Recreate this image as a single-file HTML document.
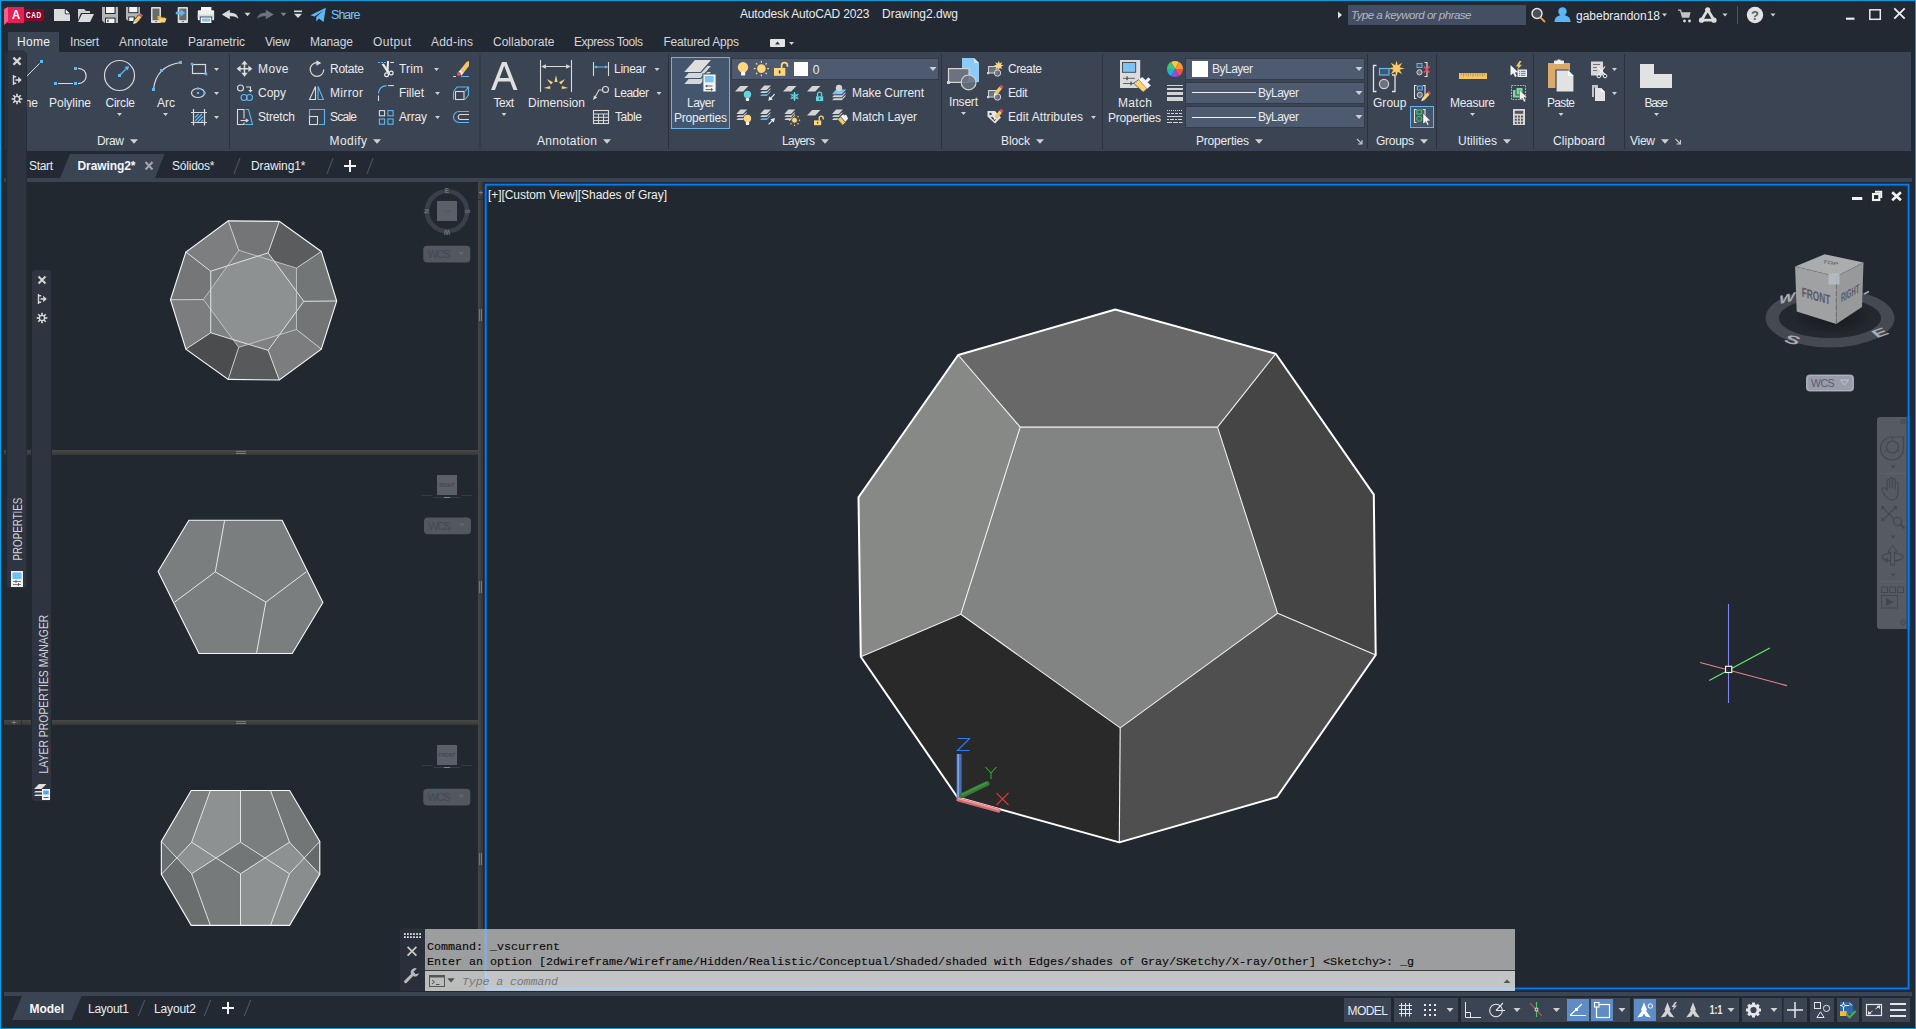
<!DOCTYPE html>
<html><head><meta charset="utf-8"><title>Autodesk AutoCAD 2023 - Drawing2.dwg</title>
<style>html,body{margin:0;padding:0;background:#222933;overflow:hidden}svg{display:block;font-family:"Liberation Sans",sans-serif}text{white-space:pre}</style></head>
<body>
<svg width="1916" height="1029" viewBox="0 0 1916 1029">
<rect x="0" y="0" width="1916" height="1029" fill="#222933" />
<rect x="8" y="52" width="1903" height="99" fill="#3b4453" />
<rect x="8" y="32" width="51" height="20" fill="#3b4453" />
<rect x="27" y="178" width="1885" height="4" fill="#3b4453" />
<rect x="4" y="992" width="1908" height="4" fill="#3b4453" />
<rect x="4" y="182" width="1908" height="810" fill="#212830" />
<polygon points="4,9 8,7 8,21.5 4,25" fill="#f0628c" stroke="none" stroke-width="1" />
<rect x="8" y="7" width="16" height="16" fill="#e61f55" />
<rect x="24" y="9" width="20" height="12" fill="#87062b" />
<text x="0" y="0" font-size="12" fill="#fff" font-weight="bold" transform="translate(11.9 18.9) scale(0.94 1)">A</text>
<text x="0" y="0" font-size="8.4" fill="#fff" font-weight="bold" letter-spacing="0.9" transform="translate(25.9 18) scale(0.76 1)">CAD</text>
<polygon points="54,9 65,9 70,14 70,21 54,21" fill="#dcdcdc" stroke="none" stroke-width="1" />
<path d="M65.3 9 V13.8 H70" fill="none" stroke="#222933" stroke-width="1" />
<polygon points="65.9,9.7 69.5,13.2 65.9,13.2" fill="#f6f6f6" stroke="none" stroke-width="1" />
<path d="M78 9 h6 l2 2 h4 v2 h-9 l-3 7 z" fill="#d0d0d0" stroke="none" stroke-width="1" />
<polygon points="82,14 94,14 90,22 78,22" fill="#dcdcdc" stroke="none" stroke-width="1" />
<rect x="102" y="7" width="16" height="16" fill="#b6b6b6" />
<rect x="105" y="7" width="10.6" height="7" fill="#222933" />
<rect x="106" y="7" width="8.5" height="6" fill="#f2f2f2" />
<rect x="105" y="17.6" width="10.6" height="5.4" fill="#222933" />
<rect x="106" y="18.6" width="8.5" height="4.4" fill="#f2f2f2" />
<rect x="107.3" y="19.6" width="1.3" height="2.6" fill="#444" />
<polygon points="102,20.5 104.5,23 102,23" fill="#222933" stroke="none" stroke-width="1" />
<rect x="126" y="7" width="14" height="14" fill="#b6b6b6" />
<rect x="128.3" y="7" width="10" height="6.2" fill="#222933" />
<rect x="129.2" y="7" width="8.2" height="5.2" fill="#f2f2f2" />
<rect x="128.3" y="16.5" width="6.5" height="4.5" fill="#222933" />
<rect x="129.2" y="17.4" width="4.5" height="3.6" fill="#f2f2f2" />
<polygon points="126,19 128,21 126,21" fill="#222933" stroke="none" stroke-width="1" />
<polygon points="133.2,20.5 138.6,14.2 142.4,17.4 137,23.7" fill="#222933" stroke="none" stroke-width="1" />
<polygon points="134,20.6 138.8,15 141.5,17.3 136.7,22.9" fill="#f3c662" stroke="none" stroke-width="1" />
<polygon points="138.8,15 140.4,13.2 143.1,15.5 141.5,17.3" fill="#ee4d5e" stroke="none" stroke-width="1" />
<polygon points="134,20.6 136.7,22.9 133.2,24" fill="#ececec" stroke="none" stroke-width="1" />
<rect x="151" y="7" width="10" height="16" fill="#dedede" rx="1"/>
<rect x="152.5" y="8.6" width="7" height="11.6" fill="#6a6a6a" />
<rect x="155" y="21.2" width="2" height="0.9" fill="#666" />
<path d="M157.6 16 h3.2 l1 1.4 h3.4 v2 h-7.6 z" fill="#e9b549" stroke="none" stroke-width="1" />
<polygon points="159.6,18.4 166.6,18.4 165,22.6 158,22.6" fill="#fbd476" stroke="none" stroke-width="1" />
<rect x="177.7" y="7" width="10.3" height="16" fill="#dedede" rx="1"/>
<rect x="179.3" y="8.6" width="7.2" height="11.6" fill="#6a6a6a" />
<rect x="182" y="21.2" width="2" height="0.9" fill="#666" />
<path d="M175.8 11.7 h4.8 v-2.5 l4.6 3.8 l-4.6 3.8 v-2.5 h-4.8 z" fill="#5cb8f5" stroke="none" stroke-width="1" />
<rect x="201" y="7" width="10.4" height="5" fill="#f6f6f6" />
<rect x="197.8" y="10.2" width="16.3" height="10" fill="#f0f0f0" rx="1"/>
<rect x="197.8" y="14.5" width="16.3" height="3.5" fill="#dadada" />
<rect x="199.8" y="16.6" width="12.4" height="6.5" fill="#222933" />
<rect x="200.6" y="17.4" width="10.8" height="5.6" fill="#f6f6f6" />
<rect x="202" y="18.6" width="8.2" height="3" fill="#7cc4f6" />
<path d="M221.8 14.5 L229.8 9.8 V12.7 C235.2 12.7 237.9 14.8 238.3 18.7 C236.2 16.7 234 16.3 229.8 16.3 V19.2 Z" fill="#dcdcdc" stroke="none" stroke-width="1" />
<polygon points="244.5,12.75 250.5,12.75 247.5,16.25" fill="#d4d4d4" stroke="none" stroke-width="1" />
<path d="M273.8 14.5 L265.8 9.8 V12.7 C260.4 12.7 257.7 14.8 257.3 18.7 C259.4 16.7 261.6 16.3 265.8 16.3 V19.2 Z" fill="#6d737e" stroke="none" stroke-width="1" />
<polygon points="280.5,12.75 286.5,12.75 283.5,16.25" fill="#7d838d" stroke="none" stroke-width="1" />
<rect x="294" y="10.5" width="8" height="1.6" fill="#dcdcdc" />
<polygon points="294.0,13.7 302.0,13.7 298,18.1" fill="#dcdcdc" stroke="none" stroke-width="1" />
<path d="M310.4 15.2 L325.8 7.8 L323.6 22 L318.8 18.6 L316.4 21.6 L316.2 17 L323.4 10.6 L314.6 16.4 Z" fill="#5cb8f5" stroke="none" stroke-width="1" />
<text x="331" y="19.3" font-size="12.5" fill="#78c4fb" textLength="29.5" lengthAdjust="spacing" >Share</text>
<text x="740" y="17.6" font-size="12" fill="#e9ebee" textLength="129.5" lengthAdjust="spacing" >Autodesk AutoCAD 2023</text>
<text x="882" y="17.6" font-size="12" fill="#e9ebee" textLength="76" lengthAdjust="spacing" >Drawing2.dwg</text>
<polygon points="1338,11.5 1342,15 1338,18.5" fill="#e0e0e0" stroke="none" stroke-width="1" />
<rect x="1348" y="5" width="178" height="20" fill="#454f63" />
<text x="1351" y="19" font-size="11.5" fill="#b3b7bf" textLength="120.5" lengthAdjust="spacing" font-style="italic" >Type a keyword or phrase</text>
<circle cx="1537" cy="13.5" r="5" fill="#4a4f58" stroke="#e8e8e8" stroke-width="1.4" />
<line x1="1540.5" y1="17.5" x2="1545" y2="22" stroke="#e0a050" stroke-width="1.8" />
<circle cx="1562.5" cy="11.5" r="4.2" fill="#5bb5f5" stroke="none" stroke-width="1" />
<path d="M1554.5 22 c0 -5 3.5 -7 8 -7 s8 2 8 7 z" fill="#5bb5f5" stroke="none" stroke-width="1" />
<text x="1576" y="19.8" font-size="12" fill="#e9ebee" textLength="84" lengthAdjust="spacing" >gabebrandon18</text>
<polygon points="1662.0,13.5 1667.0,13.5 1664.5,16.5" fill="#d0d0d0" stroke="none" stroke-width="1" />
<path d="M1678 9.5 h3 l0.8 2.8 h8.8 l-1.4 5.4 h-7.2 l-2 -7 h-2 z" fill="#c4c4c4" stroke="none" stroke-width="1" />
<circle cx="1684.5" cy="21" r="1.4" fill="#dcdcdc" stroke="none" stroke-width="1" />
<circle cx="1689.5" cy="21" r="1.4" fill="#dcdcdc" stroke="none" stroke-width="1" />
<polygon points="1707.7,9.8 1714,20.2 1701.5,20.2" fill="none" stroke="#dcdcdc" stroke-width="2.8" stroke-linejoin="round"/>
<circle cx="1707.7" cy="9.8" r="2.6" fill="#dcdcdc" stroke="none" stroke-width="1" />
<circle cx="1714" cy="20.2" r="2.6" fill="#dcdcdc" stroke="none" stroke-width="1" />
<circle cx="1701.5" cy="20.2" r="2.6" fill="#dcdcdc" stroke="none" stroke-width="1" />
<polygon points="1722.5,13.5 1727.5,13.5 1725,16.5" fill="#d0d0d0" stroke="none" stroke-width="1" />
<line x1="1737.5" y1="6" x2="1737.5" y2="24" stroke="#46566c" stroke-width="1" />
<circle cx="1755" cy="15" r="8.2" fill="#e2e2e2" stroke="none" stroke-width="1" />
<text x="1755" y="19.6" font-size="13" fill="#5a5f68" font-weight="bold" text-anchor="middle" >?</text>
<polygon points="1770.5,13.5 1775.5,13.5 1773,16.5" fill="#d0d0d0" stroke="none" stroke-width="1" />
<rect x="1846" y="17.6" width="8.5" height="2.2" fill="#e8e8e8" />
<rect x="1869.8" y="9.8" width="10.5" height="9.5" fill="none" stroke="#e8e8e8" stroke-width="1.5"/>
<line x1="1894.3" y1="8.3" x2="1904.7" y2="18.7" stroke="#ececec" stroke-width="1.9" />
<line x1="1904.7" y1="8.3" x2="1894.3" y2="18.7" stroke="#ececec" stroke-width="1.9" />
<text x="17" y="46" font-size="12" fill="#f2f3f5" textLength="33" lengthAdjust="spacing" >Home</text>
<text x="70" y="46" font-size="12" fill="#d3d6db" textLength="29" lengthAdjust="spacing" >Insert</text>
<text x="119" y="46" font-size="12" fill="#d3d6db" textLength="49" lengthAdjust="spacing" >Annotate</text>
<text x="188" y="46" font-size="12" fill="#d3d6db" textLength="57" lengthAdjust="spacing" >Parametric</text>
<text x="265" y="46" font-size="12" fill="#d3d6db" textLength="25" lengthAdjust="spacing" >View</text>
<text x="310" y="46" font-size="12" fill="#d3d6db" textLength="43" lengthAdjust="spacing" >Manage</text>
<text x="373" y="46" font-size="12" fill="#d3d6db" textLength="38" lengthAdjust="spacing" >Output</text>
<text x="431" y="46" font-size="12" fill="#d3d6db" textLength="42" lengthAdjust="spacing" >Add-ins</text>
<text x="493" y="46" font-size="12" fill="#d3d6db" textLength="61.5" lengthAdjust="spacing" >Collaborate</text>
<text x="574" y="46" font-size="12" fill="#d3d6db" textLength="69" lengthAdjust="spacing" >Express Tools</text>
<text x="663.5" y="46" font-size="12" fill="#d3d6db" textLength="75.5" lengthAdjust="spacing" >Featured Apps</text>
<rect x="770" y="39" width="15" height="8" fill="#e4e4e4" rx="1"/>
<polygon points="775,44.5 780,44.5 777.5,41.5" fill="#333" stroke="none" stroke-width="1" />
<polygon points="789.0,42.0 794.0,42.0 791.5,45.0" fill="#d0d0d0" stroke="none" stroke-width="1" />
<line x1="229.5" y1="54" x2="229.5" y2="149" stroke="#2b323e" stroke-width="1" />
<line x1="480" y1="54" x2="480" y2="149" stroke="#2b323e" stroke-width="1" />
<line x1="668.5" y1="54" x2="668.5" y2="149" stroke="#2b323e" stroke-width="1" />
<line x1="941.5" y1="54" x2="941.5" y2="149" stroke="#2b323e" stroke-width="1" />
<line x1="1102.5" y1="54" x2="1102.5" y2="149" stroke="#2b323e" stroke-width="1" />
<line x1="1367.5" y1="54" x2="1367.5" y2="149" stroke="#2b323e" stroke-width="1" />
<line x1="1436.5" y1="54" x2="1436.5" y2="149" stroke="#2b323e" stroke-width="1" />
<line x1="1533.5" y1="54" x2="1533.5" y2="149" stroke="#2b323e" stroke-width="1" />
<line x1="1624.5" y1="54" x2="1624.5" y2="149" stroke="#2b323e" stroke-width="1" />
<text x="97" y="144.7" font-size="12" fill="#e9ebee" textLength="27" lengthAdjust="spacing" >Draw</text>
<polygon points="130.0,139.25 138.0,139.25 134,143.75" fill="#d0d0d0" stroke="none" stroke-width="1" />
<text x="329.5" y="144.7" font-size="12" fill="#e9ebee" textLength="37.5" lengthAdjust="spacing" >Modify</text>
<polygon points="373.0,139.25 381.0,139.25 377,143.75" fill="#d0d0d0" stroke="none" stroke-width="1" />
<text x="537" y="144.7" font-size="12" fill="#e9ebee" textLength="60" lengthAdjust="spacing" >Annotation</text>
<polygon points="603.0,139.25 611.0,139.25 607,143.75" fill="#d0d0d0" stroke="none" stroke-width="1" />
<text x="782" y="144.7" font-size="12" fill="#e9ebee" textLength="33" lengthAdjust="spacing" >Layers</text>
<polygon points="821.0,139.25 829.0,139.25 825,143.75" fill="#d0d0d0" stroke="none" stroke-width="1" />
<text x="1001" y="144.7" font-size="12" fill="#e9ebee" textLength="29" lengthAdjust="spacing" >Block</text>
<polygon points="1036.0,139.25 1044.0,139.25 1040,143.75" fill="#d0d0d0" stroke="none" stroke-width="1" />
<text x="1196" y="144.7" font-size="12" fill="#e9ebee" textLength="53" lengthAdjust="spacing" >Properties</text>
<polygon points="1255.0,139.25 1263.0,139.25 1259,143.75" fill="#d0d0d0" stroke="none" stroke-width="1" />
<text x="1376" y="144.7" font-size="12" fill="#e9ebee" textLength="38" lengthAdjust="spacing" >Groups</text>
<polygon points="1420.0,139.25 1428.0,139.25 1424,143.75" fill="#d0d0d0" stroke="none" stroke-width="1" />
<text x="1458" y="144.7" font-size="12" fill="#e9ebee" textLength="39" lengthAdjust="spacing" >Utilities</text>
<polygon points="1503.0,139.25 1511.0,139.25 1507,143.75" fill="#d0d0d0" stroke="none" stroke-width="1" />
<text x="1553" y="144.7" font-size="12" fill="#e9ebee" textLength="52" lengthAdjust="spacing" >Clipboard</text>
<text x="1630" y="144.7" font-size="12" fill="#e9ebee" textLength="25" lengthAdjust="spacing" >View</text>
<polygon points="1661.0,139.25 1669.0,139.25 1665,143.75" fill="#d0d0d0" stroke="none" stroke-width="1" />
<path d="M1357.0 139.0 L1361.5 143.5 M1362.0 140.0 V144.0 H1358.0" fill="none" stroke="#c8c8c8" stroke-width="1.1" />
<path d="M1675.5 139.0 L1680 143.5 M1680.5 140.0 V144.0 H1676.5" fill="none" stroke="#c8c8c8" stroke-width="1.1" />
<line x1="22" y1="81" x2="39.6" y2="63.4" stroke="#dadada" stroke-width="1" />
<rect x="40.0" y="60.0" width="3" height="3" fill="#5cb8f5" />
<text x="15.5" y="107" font-size="12" fill="#e9ebee" textLength="22.5" lengthAdjust="spacing" >Line</text>
<path d="M58 83.5 H73 M78 68.3 C88.8 68.3 88.8 83.6 78 83.6" fill="none" stroke="#dadada" stroke-width="1.2" />
<rect x="54.0" y="82.0" width="3" height="3" fill="#5cb8f5" />
<rect x="74.0" y="82.0" width="3" height="3" fill="#5cb8f5" />
<rect x="74.0" y="67.0" width="3" height="3" fill="#5cb8f5" />
<text x="49" y="107" font-size="12" fill="#e9ebee" textLength="42" lengthAdjust="spacing" >Polyline</text>
<circle cx="119.5" cy="75.5" r="15" fill="none" stroke="#dadada" stroke-width="1.2" />
<line x1="119.5" y1="75.5" x2="127" y2="68" stroke="#5cb8f5" stroke-width="1.2" />
<polygon points="129,66 124.5,67 128,70.5" fill="#5cb8f5" stroke="none" stroke-width="1" />
<rect x="118.0" y="74.0" width="3" height="3" fill="#5cb8f5" />
<text x="105.5" y="107" font-size="12" fill="#e9ebee" textLength="29.5" lengthAdjust="spacing" >Circle</text>
<polygon points="117.0,113.0 122.0,113.0 119.5,116.0" fill="#d0d0d0" stroke="none" stroke-width="1" />
<path d="M153.5 89.5 Q156 66 180.5 62.5" fill="none" stroke="#dadada" stroke-width="1.2" />
<rect x="152.0" y="88.0" width="3" height="3" fill="#5cb8f5" />
<rect x="160.0" y="69.0" width="3" height="3" fill="#5cb8f5" />
<rect x="179.0" y="61.0" width="3" height="3" fill="#5cb8f5" />
<text x="157" y="107" font-size="12" fill="#e9ebee" textLength="18" lengthAdjust="spacing" >Arc</text>
<polygon points="163.0,113.0 168.0,113.0 165.5,116.0" fill="#d0d0d0" stroke="none" stroke-width="1" />
<rect x="192.5" y="64.5" width="13" height="9" fill="none" stroke="#dadada" stroke-width="1.2"/>
<rect x="190.75" y="62.75" width="2.5" height="2.5" fill="#5cb8f5" />
<rect x="204.75" y="72.75" width="2.5" height="2.5" fill="#5cb8f5" />
<polygon points="214.0,68.0 219.0,68.0 216.5,71.0" fill="#d0d0d0" stroke="none" stroke-width="1" />
<ellipse cx="198" cy="93" rx="6.5" ry="4.5" fill="none" stroke="#dadada" stroke-width="1.2" />
<rect x="196.9" y="87.4" width="2.2" height="2.2" fill="#5cb8f5" />
<rect x="196.9" y="91.9" width="2.2" height="2.2" fill="#5cb8f5" />
<rect x="203.4" y="91.9" width="2.2" height="2.2" fill="#5cb8f5" />
<polygon points="214.0,92.0 219.0,92.0 216.5,95.0" fill="#d0d0d0" stroke="none" stroke-width="1" />
<g stroke="#5cb8f5" stroke-width="1.2"><line x1="195" y1="117.5" x2="198.5" y2="114"/><line x1="195" y1="121" x2="202" y2="114"/><line x1="197.5" y1="122" x2="203" y2="116.5"/><line x1="201" y1="122" x2="203" y2="120"/></g>
<path d="M191 112.5 H207 M191 122.5 H207 M193.5 109 V125.5 M204.5 109 V125.5" fill="none" stroke="#dadada" stroke-width="1.2" />
<polygon points="214.0,116.0 219.0,116.0 216.5,119.0" fill="#d0d0d0" stroke="none" stroke-width="1" />
<text x="258" y="73" font-size="12" fill="#e9ebee" textLength="30.5" lengthAdjust="spacing" >Move</text>
<text x="258" y="97" font-size="12" fill="#e9ebee" textLength="28" lengthAdjust="spacing" >Copy</text>
<text x="258" y="121" font-size="12" fill="#e9ebee" textLength="37" lengthAdjust="spacing" >Stretch</text>
<text x="330" y="73" font-size="12" fill="#e9ebee" textLength="34" lengthAdjust="spacing" >Rotate</text>
<text x="330" y="97" font-size="12" fill="#e9ebee" textLength="33" lengthAdjust="spacing" >Mirror</text>
<text x="330" y="121" font-size="12" fill="#e9ebee" textLength="27" lengthAdjust="spacing" >Scale</text>
<text x="399" y="73" font-size="12" fill="#e9ebee" textLength="24" lengthAdjust="spacing" >Trim</text>
<text x="399" y="97" font-size="12" fill="#e9ebee" textLength="25" lengthAdjust="spacing" >Fillet</text>
<text x="399" y="121" font-size="12" fill="#e9ebee" textLength="28" lengthAdjust="spacing" >Array</text>
<polygon points="434.0,68.0 439.0,68.0 436.5,71.0" fill="#d0d0d0" stroke="none" stroke-width="1" />
<polygon points="435.0,92.0 440.0,92.0 437.5,95.0" fill="#d0d0d0" stroke="none" stroke-width="1" />
<polygon points="435.0,116.0 440.0,116.0 437.5,119.0" fill="#d0d0d0" stroke="none" stroke-width="1" />
<path d="M244.5 63 V74.5 M239 68.7 H250" fill="none" stroke="#dadada" stroke-width="1.5" />
<polygon points="241.3,64.6 247.7,64.6 244.5,60.6" fill="#dadada" stroke="none" stroke-width="1" />
<polygon points="241.3,72.8 247.7,72.8 244.5,76.8" fill="#dadada" stroke="none" stroke-width="1" />
<polygon points="240.6,65.5 240.6,71.9 236.6,68.7" fill="#dadada" stroke="none" stroke-width="1" />
<polygon points="248.4,65.5 248.4,71.9 252.4,68.7" fill="#dadada" stroke="none" stroke-width="1" />
<circle cx="240.5" cy="88" r="3" fill="none" stroke="#dadada" stroke-width="1.1" />
<path d="M246 87 H250.5 V91" fill="none" stroke="#dadada" stroke-width="1.1" />
<polygon points="248.2,90 252.8,90 250.5,92.5" fill="#dadada" stroke="none" stroke-width="1" />
<circle cx="244" cy="97.5" r="3" fill="none" stroke="#5cb8f5" stroke-width="1.1" />
<circle cx="249.5" cy="97.5" r="3" fill="none" stroke="#5cb8f5" stroke-width="1.1" />
<path d="M244 118.5 V109.5 H237.5 V124.5 H244 V122.5" fill="none" stroke="#dadada" stroke-width="1.1" />
<path d="M245.5 109.5 H248.5 L252.5 124.5 H245" fill="none" stroke="#5cb8f5" stroke-width="1.1" />
<line x1="240.5" y1="120.5" x2="246.5" y2="120.5" stroke="#dadada" stroke-width="1.1" />
<polygon points="245.8,118.2 249,120.5 245.8,122.8" fill="#dadada" stroke="none" stroke-width="1" />
<path d="M317 62.7 A6.8 6.8 0 1 0 323.8 69.5" fill="none" stroke="#dadada" stroke-width="1.2" />
<polygon points="316.4,60.2 321.4,62.9 316.4,65.8" fill="#dadada" stroke="none" stroke-width="1" />
<polygon points="309.5,99.5 315.5,86.5 315.5,99.5" fill="none" stroke="#dadada" stroke-width="1.1" />
<polygon points="318,99.5 318,86.5 323.5,99.5" fill="none" stroke="#5cb8f5" stroke-width="1.1" />
<path d="M309.5 117 V109.5 H324.5 V124.5 H319" fill="none" stroke="#5cb8f5" stroke-width="1.1" />
<rect x="309.5" y="116.5" width="8" height="8" fill="none" stroke="#dadada" stroke-width="1.1"/>
<line x1="378" y1="62.5" x2="386" y2="62.5" stroke="#5cb8f5" stroke-width="1.1" stroke-dasharray="2 1"/>
<line x1="390.3" y1="62.5" x2="394" y2="62.5" stroke="#dadada" stroke-width="1.1" />
<polygon points="381.6,64.2 383.8,63.4 389.6,72.2 387.6,73.2" fill="#ececec" stroke="none" stroke-width="1" />
<polygon points="387.1,60.8 389.1,61.2 388.5,72 386.3,71.6" fill="#ececec" stroke="none" stroke-width="1" />
<circle cx="386.6" cy="74.8" r="1.9" fill="none" stroke="#ececec" stroke-width="1.2" />
<circle cx="391.2" cy="73" r="1.9" fill="none" stroke="#ececec" stroke-width="1.2" />
<path d="M378.5 93.5 Q379 86.2 386.5 85.6" fill="none" stroke="#5cb8f5" stroke-width="1.2" />
<line x1="388" y1="85.6" x2="394" y2="85.6" stroke="#dadada" stroke-width="1.1" />
<line x1="378.5" y1="95.5" x2="378.5" y2="101" stroke="#dadada" stroke-width="1.1" />
<rect x="379.4" y="110.6" width="5.2" height="5.2" fill="none" stroke="#dadada" stroke-width="1.1"/>
<rect x="387.9" y="110.6" width="5.2" height="5.2" fill="none" stroke="#5cb8f5" stroke-width="1.1"/>
<rect x="379.4" y="119" width="5.2" height="5.2" fill="none" stroke="#5cb8f5" stroke-width="1.1"/>
<rect x="387.9" y="119" width="5.2" height="5.2" fill="none" stroke="#5cb8f5" stroke-width="1.1"/>
<polygon points="458.5,72 466.5,62 469,61 469,66 461.5,75.5" fill="#f3c56a" stroke="none" stroke-width="1" />
<polygon points="458.5,72 460.5,70 463.2,73.3 461.5,75.5" fill="#f4f4f4" stroke="none" stroke-width="1" />
<circle cx="458.8" cy="74" r="1.9" fill="#e8485a" stroke="none" stroke-width="1" />
<line x1="453" y1="76.5" x2="456" y2="76.5" stroke="#dadada" stroke-width="1" />
<line x1="461" y1="76.5" x2="469" y2="76.5" stroke="#5cb8f5" stroke-width="1" />
<path d="M453.5 91.5 L457 87 H468.5 L468.5 95 L465 99.5 M468.5 87 L465 91.5" fill="none" stroke="#5cb8f5" stroke-width="1.1" />
<rect x="455.5" y="91.5" width="8.5" height="8" fill="none" stroke="#dadada" stroke-width="1.1"/>
<line x1="453.5" y1="91.5" x2="453.5" y2="99.5" stroke="#5cb8f5" stroke-width="1.1" />
<path d="M469 111.5 H459 A5.5 5.5 0 0 0 459 122.5 H469" fill="none" stroke="#5cb8f5" stroke-width="1.1" />
<path d="M469 114.5 H460 A2.6 2.6 0 0 0 460 119.5 H469" fill="none" stroke="#dadada" stroke-width="1.1" />
<path d="M491 90 L502 62 H506.5 L517.5 90 H513.5 L510.2 81.5 H498.2 L495 90 Z M499.6 78 H508.9 L504.2 65.8 Z" fill="#e0e0e0" stroke="none" stroke-width="1" fill-rule="evenodd"/>
<text x="493.5" y="107" font-size="12" fill="#e9ebee" textLength="20.5" lengthAdjust="spacing" >Text</text>
<polygon points="501.5,113.0 506.5,113.0 504,116.0" fill="#d0d0d0" stroke="none" stroke-width="1" />
<path d="M540.5 60 V92 M571.5 60 V92 M544 66.5 H568" fill="none" stroke="#dadada" stroke-width="1.1" />
<polygon points="541.3,66.5 545.8,64.2 545.8,68.8" fill="#dadada" stroke="none" stroke-width="1" />
<polygon points="570.7,66.5 566.2,64.2 566.2,68.8" fill="#dadada" stroke="none" stroke-width="1" />
<polygon points="556,75.3 557.6,82 554.4,82" fill="#fbd378" stroke="none" stroke-width="1" />
<polygon points="546.8,79 553,82.2 551,84.6" fill="#fbd378" stroke="none" stroke-width="1" />
<polygon points="565.2,79 559,82.2 561,84.6" fill="#fbd378" stroke="none" stroke-width="1" />
<polygon points="543.8,87.9 550.2,86 550.2,88.9" fill="#fbd378" stroke="none" stroke-width="1" />
<polygon points="568.2,87.9 561.8,86 561.8,88.9" fill="#fbd378" stroke="none" stroke-width="1" />
<text x="528" y="107" font-size="12" fill="#e9ebee" textLength="57" lengthAdjust="spacing" >Dimension</text>
<path d="M593.5 62 V76 M608.5 62 V76" fill="none" stroke="#dadada" stroke-width="1.1" />
<line x1="594.5" y1="67" x2="607.5" y2="67" stroke="#5cb8f5" stroke-width="1.1" />
<polygon points="594,67 597,65.5 597,68.5" fill="#5cb8f5" stroke="none" stroke-width="1" />
<polygon points="608,67 605,65.5 605,68.5" fill="#5cb8f5" stroke="none" stroke-width="1" />
<text x="614" y="73" font-size="12" fill="#e9ebee" textLength="32" lengthAdjust="spacing" >Linear</text>
<polygon points="654.5,68.0 659.5,68.0 657,71.0" fill="#d0d0d0" stroke="none" stroke-width="1" />
<circle cx="605.5" cy="89.5" r="3" fill="none" stroke="#dadada" stroke-width="1.1" />
<path d="M602.5 90 H599 L594.5 98" fill="none" stroke="#dadada" stroke-width="1.1" />
<polygon points="593,100 594,95.5 597.3,97.6" fill="#dadada" stroke="none" stroke-width="1" />
<text x="614" y="97" font-size="12" fill="#e9ebee" textLength="35" lengthAdjust="spacing" >Leader</text>
<polygon points="656.5,92.0 661.5,92.0 659,95.0" fill="#d0d0d0" stroke="none" stroke-width="1" />
<rect x="593.5" y="110.5" width="15" height="13" fill="none" stroke="#dadada" stroke-width="1.1"/>
<path d="M593.5 114 H608.5 M593.5 117.3 H608.5 M593.5 120.6 H608.5 M598.5 114 V123.5 M603.5 114 V123.5" fill="none" stroke="#dadada" stroke-width="1" />
<text x="615" y="121" font-size="12" fill="#e9ebee" textLength="27" lengthAdjust="spacing" >Table</text>
<rect x="671.5" y="57.5" width="58" height="71" fill="#44566d" stroke="#69b3ea" stroke-width="1"/>
<polygon points="682.9,84.5 694.5,71.5 712.3,71.5 700.8,84.5" fill="#d6d6d6" stroke="#44566d" stroke-width="1.2" />
<polygon points="682.9,78.5 694.5,65.5 712.3,65.5 700.8,78.5" fill="#d6d6d6" stroke="#44566d" stroke-width="1.2" />
<polygon points="682.9,72.5 694.5,59.5 712.3,59.5 700.8,72.5" fill="#dedede" stroke="#44566d" stroke-width="1.2" />
<rect x="702.9" y="74" width="13.2" height="18" fill="#f4f4f4" stroke="#44566d" stroke-width="1"/>
<rect x="704.9" y="76" width="8.8" height="6.3" fill="#7cc4f6" />
<path d="M706.5 86 H712.5 M705.5 89.6 H711.5" fill="none" stroke="#555" stroke-width="0.9" />
<polygon points="705,86 707.2,84.5 707.2,87.5" fill="#555" stroke="none" stroke-width="1" />
<polygon points="713.2,89.6 711,88.1 711,91.1" fill="#555" stroke="none" stroke-width="1" />
<text x="687" y="107" font-size="12" fill="#e9ebee" textLength="28" lengthAdjust="spacing" >Layer</text>
<text x="674" y="121.5" font-size="12" fill="#e9ebee" textLength="53" lengthAdjust="spacing" >Properties</text>
<rect x="731.5" y="58.5" width="207" height="21" fill="#4e5a6f" stroke="#333b49" stroke-width="1"/>
<circle cx="743" cy="67.2" r="5.2" fill="#ffd67c" stroke="none" stroke-width="1" />
<rect x="741" y="71.6" width="4.2" height="4" fill="#f4f4f4" rx="1.2"/>
<circle cx="761.4" cy="68.6" r="4.3" fill="#ffd67c" stroke="none" stroke-width="1" />
<line x1="767.1999999999999" y1="68.6" x2="769.0" y2="68.6" stroke="#ffd67c" stroke-width="1.2" />
<line x1="765.501219330882" y1="72.70121933088197" x2="766.7740115370177" y2="73.97401153701776" stroke="#ffd67c" stroke-width="1.2" />
<line x1="761.4" y1="74.39999999999999" x2="761.4" y2="76.19999999999999" stroke="#ffd67c" stroke-width="1.2" />
<line x1="757.298780669118" y1="72.70121933088197" x2="756.0259884629822" y2="73.97401153701776" stroke="#ffd67c" stroke-width="1.2" />
<line x1="755.6" y1="68.6" x2="753.8" y2="68.6" stroke="#ffd67c" stroke-width="1.2" />
<line x1="757.298780669118" y1="64.49878066911802" x2="756.0259884629822" y2="63.22598846298224" stroke="#ffd67c" stroke-width="1.2" />
<line x1="761.4" y1="62.8" x2="761.4" y2="60.99999999999999" stroke="#ffd67c" stroke-width="1.2" />
<line x1="765.5012193308819" y1="64.49878066911802" x2="766.7740115370177" y2="63.22598846298223" stroke="#ffd67c" stroke-width="1.2" />
<rect x="774" y="68" width="11.3" height="7.8" fill="#ffd67c" />
<path d="M781.6 68 V65.6 A2.9 2.9 0 0 1 787.4 65.6 V66.8" fill="none" stroke="#ffd67c" stroke-width="1.7" />
<rect x="778.8" y="70.4" width="1.6" height="3" fill="#4a4a3a" />
<rect x="794" y="62" width="14" height="14" fill="#ffffff" />
<text x="812.7" y="73.6" font-size="12" fill="#e9ebee" >0</text>
<polygon points="929.5,67.0 936.5,67.0 933,71.0" fill="#d0d0d0" stroke="none" stroke-width="1" />
<polygon points="735,91.6 740.2,86 748.4,86 743.2,91.6" fill="#d4d4d4" stroke="none" stroke-width="1" />
<circle cx="747.5" cy="94.5" r="3.7" fill="#62d4de" stroke="none" stroke-width="1" />
<rect x="745.8" y="97.9" width="3.4" height="3.2" fill="#f4f4f4" rx="1"/>
<polygon points="758.8,96.6 764.0,91 772.2,91 767.0,96.6" fill="#5cb8f5" stroke="#3b4453" stroke-width="1.1" />
<polygon points="758.8,93.6 764.0,88 772.2,88 767.0,93.6" fill="#d4d4d4" stroke="#3b4453" stroke-width="1.1" />
<polygon points="758.8,90.6 764.0,85 772.2,85 767.0,90.6" fill="#d4d4d4" stroke="#3b4453" stroke-width="1.1" />
<line x1="774.6" y1="94.2" x2="769.4" y2="99.6" stroke="#ececec" stroke-width="1.2" />
<polygon points="768.29,100.75 772.79,99.54 769.34,96.21" fill="#ececec" stroke="none" stroke-width="1" />
<polygon points="783,91.6 788.2,86 796.4,86 791.2,91.6" fill="#d4d4d4" stroke="none" stroke-width="1" />
<line x1="798.39711431703" y1="98.75" x2="790.60288568297" y2="94.25" stroke="#62d4de" stroke-width="1.2" />
<line x1="794.5" y1="101.0" x2="794.5" y2="92.0" stroke="#62d4de" stroke-width="1.2" />
<line x1="790.60288568297" y1="98.75" x2="798.39711431703" y2="94.25" stroke="#62d4de" stroke-width="1.2" />
<polygon points="797.3,96.5 795.9,98.92 793.1,98.92 791.7,96.5 793.1,94.08 795.9,94.08" fill="none" stroke="#62d4de" stroke-width="0.9" />
<polygon points="807,91.6 812.2,86 820.4,86 815.2,91.6" fill="#d4d4d4" stroke="none" stroke-width="1" />
<rect x="816.0" y="96.3" width="7.2" height="4.8" fill="#62d4de" />
<path d="M817.6 96.3 V94.1 A2 2 0 0 1 821.6 94.1 V96.3" fill="none" stroke="#62d4de" stroke-width="1.3" />
<rect x="819.0" y="97.7" width="1.2" height="1.8" fill="#3b4453" />
<polygon points="830.7,100.8 836.0,95 847.3,95 842.0,100.8" fill="#d4d4d4" stroke="#3b4453" stroke-width="1.1" />
<polygon points="830.7,97.8 836.0,92 847.3,92 842.0,97.8" fill="#d4d4d4" stroke="#3b4453" stroke-width="1.1" />
<polygon points="830.7,94.8 836.0,89 847.3,89 842.0,94.8" fill="#7cc4f6" stroke="#3b4453" stroke-width="1.1" />
<circle cx="839" cy="88" r="3.2" fill="#d4d4d4" stroke="none" stroke-width="1" />
<text x="852" y="97" font-size="12" fill="#e9ebee" textLength="72" lengthAdjust="spacing" >Make Current</text>
<polygon points="735,120.6 740.2,115 748.4,115 743.2,120.6" fill="#d4d4d4" stroke="#3b4453" stroke-width="1.1" />
<polygon points="735,117.6 740.2,112 748.4,112 743.2,117.6" fill="#d4d4d4" stroke="#3b4453" stroke-width="1.1" />
<polygon points="735,114.6 740.2,109 748.4,109 743.2,114.6" fill="#d4d4d4" stroke="#3b4453" stroke-width="1.1" />
<circle cx="747.5" cy="118.4" r="3.7" fill="#ffd67c" stroke="none" stroke-width="1" />
<rect x="745.8" y="121.80000000000001" width="3.4" height="3.2" fill="#f4f4f4" rx="1"/>
<polygon points="758.8,120.6 764.0,115 772.2,115 767.0,120.6" fill="#5cb8f5" stroke="#3b4453" stroke-width="1.1" />
<polygon points="758.8,117.6 764.0,112 772.2,112 767.0,117.6" fill="#d4d4d4" stroke="#3b4453" stroke-width="1.1" />
<polygon points="758.8,114.6 764.0,109 772.2,109 767.0,114.6" fill="#d4d4d4" stroke="#3b4453" stroke-width="1.1" />
<line x1="768.6" y1="124.4" x2="773.8" y2="119.2" stroke="#ececec" stroke-width="1.2" />
<polygon points="774.93,118.07 770.41,119.2 773.8,122.59" fill="#ececec" stroke="none" stroke-width="1" />
<polygon points="783,120.6 788.2,115 796.4,115 791.2,120.6" fill="#d4d4d4" stroke="#3b4453" stroke-width="1.1" />
<polygon points="783,117.6 788.2,112 796.4,112 791.2,117.6" fill="#d4d4d4" stroke="#3b4453" stroke-width="1.1" />
<polygon points="783,114.6 788.2,109 796.4,109 791.2,114.6" fill="#d4d4d4" stroke="#3b4453" stroke-width="1.1" />
<circle cx="794.5" cy="120.2" r="2.9" fill="#ffd67c" stroke="#3b4453" stroke-width="0.8" />
<circle cx="799.5" cy="120.2" r="0.75" fill="#ffd67c" stroke="none" stroke-width="1" />
<circle cx="798.0355339059328" cy="123.73553390593274" r="0.75" fill="#ffd67c" stroke="none" stroke-width="1" />
<circle cx="794.5" cy="125.2" r="0.75" fill="#ffd67c" stroke="none" stroke-width="1" />
<circle cx="790.9644660940672" cy="123.73553390593274" r="0.75" fill="#ffd67c" stroke="none" stroke-width="1" />
<circle cx="789.5" cy="120.2" r="0.75" fill="#ffd67c" stroke="none" stroke-width="1" />
<circle cx="790.9644660940672" cy="116.66446609406727" r="0.75" fill="#ffd67c" stroke="none" stroke-width="1" />
<circle cx="794.5" cy="115.2" r="0.75" fill="#ffd67c" stroke="none" stroke-width="1" />
<circle cx="798.0355339059328" cy="116.66446609406727" r="0.75" fill="#ffd67c" stroke="none" stroke-width="1" />
<polygon points="807,115.6 812.2,110 820.4,110 815.2,115.6" fill="#d4d4d4" stroke="none" stroke-width="1" />
<rect x="814.0" y="120.4" width="7.2" height="4.8" fill="#ffd67c" />
<path d="M819.2 120.4 V118.2 A2 2 0 0 1 823.2 118.2 V119.4" fill="none" stroke="#ffd67c" stroke-width="1.3" />
<rect x="817.0" y="121.80000000000001" width="1.2" height="1.8" fill="#3b4453" />
<polygon points="830.7,120.6 835.9,115 844.1,115 838.9,120.6" fill="#d4d4d4" stroke="#3b4453" stroke-width="1.1" />
<polygon points="830.7,117.6 835.9,112 844.1,112 838.9,117.6" fill="#d4d4d4" stroke="#3b4453" stroke-width="1.1" />
<polygon points="830.7,114.6 835.9,109 844.1,109 838.9,114.6" fill="#d4d4d4" stroke="#3b4453" stroke-width="1.1" />
<polygon points="837.6,119.4 840.6,116.8 845.6,122.6 842.6,125.2" fill="#f3c662" stroke="#3b4453" stroke-width="0.6" />
<polygon points="840.8,116.4 843.4,114.2 844.6,115.4 846,114.6 848.2,118.6 845.4,121.8" fill="#f6f6f6" stroke="none" stroke-width="1" />
<text x="852" y="121" font-size="12" fill="#e9ebee" textLength="65" lengthAdjust="spacing" >Match Layer</text>
<polygon points="962,58 974,58 979,63 979,82 962,82" fill="#8ccaf8" stroke="none" stroke-width="1" />
<polygon points="974,58 979,63 974,63" fill="#c8e6fc" stroke="none" stroke-width="1" />
<rect x="948.5" y="68.6" width="20.5" height="13.8" fill="#6b7280" stroke="#d4d4d4" stroke-width="1.2"/>
<circle cx="968.6" cy="82.4" r="7.4" fill="#6b7280" stroke="#d4d4d4" stroke-width="1.2" fill-opacity="0.85"/>
<rect x="947" y="81" width="3" height="3" fill="#d4d4d4" />
<text x="949" y="106" font-size="12" fill="#e9ebee" textLength="29" lengthAdjust="spacing" >Insert</text>
<polygon points="961.0,112.0 966.0,112.0 963.5,115.0" fill="#d0d0d0" stroke="none" stroke-width="1" />
<rect x="988.5" y="66.5" width="8.5" height="6.5" fill="#6b7280" stroke="#d4d4d4" stroke-width="1"/>
<circle cx="997.5" cy="73.0" r="3.2" fill="#6b7280" stroke="#d4d4d4" stroke-width="1" fill-opacity="0.8"/>
<rect x="987.0" y="72.0" width="2.2" height="2.2" fill="#d4d4d4" />
<polygon points="998.8,60.6 999.72,63.38 1002.34,62.06 1001.02,64.68 1003.8,65.6 1001.02,66.52 1002.34,69.14 999.72,67.82 998.8,70.6 997.88,67.82 995.26,69.14 996.58,66.52 993.8,65.6 996.58,64.68 995.26,62.06 997.88,63.38" fill="#ffd67c" stroke="none" stroke-width="1" />
<text x="1008" y="73" font-size="12" fill="#e9ebee" textLength="34" lengthAdjust="spacing" >Create</text>
<rect x="988.5" y="90.5" width="8.5" height="6.5" fill="#6b7280" stroke="#d4d4d4" stroke-width="1"/>
<circle cx="997.5" cy="97.0" r="3.2" fill="#6b7280" stroke="#d4d4d4" stroke-width="1" fill-opacity="0.8"/>
<rect x="987.0" y="96.0" width="2.2" height="2.2" fill="#d4d4d4" />
<polygon points="994.5,92.5 999.5,86.5 1002.0,88.7 997.1,94.7" fill="#f3c56a" stroke="none" stroke-width="1" />
<polygon points="999.5,86.5 1001.1,84.7 1003.5,86.9 1002.0,88.7" fill="#e8485a" stroke="none" stroke-width="1" />
<polygon points="994.5,92.5 997.1,94.7 993.7,95.9" fill="#f0f0f0" stroke="none" stroke-width="1" />
<text x="1008" y="97" font-size="12" fill="#e9ebee" textLength="19.5" lengthAdjust="spacing" >Edit</text>
<polygon points="987.5,111 995,111 1001,117.5 995,123.5 987.5,116.5" fill="#e4e4e4" stroke="none" stroke-width="1" />
<circle cx="990.5" cy="114" r="1.2" fill="#3b4453" stroke="none" stroke-width="1" />
<path d="M991.5 117 L994.5 120 L999.5 114" fill="none" stroke="#3b4453" stroke-width="1.6" />
<polygon points="994.5,116.5 999.5,110.5 1002.0,112.7 997.1,118.7" fill="#f3c56a" stroke="none" stroke-width="1" />
<polygon points="999.5,110.5 1001.1,108.7 1003.5,110.9 1002.0,112.7" fill="#e8485a" stroke="none" stroke-width="1" />
<polygon points="994.5,116.5 997.1,118.7 993.7,119.9" fill="#f0f0f0" stroke="none" stroke-width="1" />
<text x="1008" y="121" font-size="12" fill="#e9ebee" textLength="75" lengthAdjust="spacing" >Edit Attributes</text>
<polygon points="1091.0,116.0 1096.0,116.0 1093.5,119.0" fill="#d0d0d0" stroke="none" stroke-width="1" />
<rect x="1120" y="60" width="20.2" height="28" fill="#dcdcdc" />
<rect x="1122.5" y="62.5" width="13.2" height="9.8" fill="#7cc4f6" stroke="#3d4450" stroke-width="0.9"/>
<path d="M1123 78.3 H1135 M1123 83.5 H1135" fill="none" stroke="#555" stroke-width="0.9" />
<rect x="1126.3" y="76.4" width="1.5" height="3.8" fill="#555" />
<rect x="1130.3" y="81.6" width="1.5" height="3.8" fill="#555" />
<polygon points="1133.5,83.2 1138.7,79.6 1147.2,88.7 1143.1,92.2" fill="#fbd174" stroke="#3b4453" stroke-width="0.7" />
<polygon points="1138.7,79.6 1142.4,77 1150.8,85.6 1147.2,88.7" fill="#f4f4f4" stroke="none" stroke-width="1" />
<polygon points="1145.2,80.4 1148.4,77.2 1150.6,79.4 1147.4,82.6" fill="#f4f4f4" stroke="none" stroke-width="1" />
<text x="1118" y="107" font-size="12" fill="#e9ebee" textLength="34" lengthAdjust="spacing" >Match</text>
<text x="1108" y="121.5" font-size="12" fill="#e9ebee" textLength="53" lengthAdjust="spacing" >Properties</text>
<path d="M1175 69 L1171.00 62.07 A8 8 0 0 1 1179.00 62.07 Z" fill="#f9c838" stroke="none" stroke-width="1" />
<path d="M1175 69 L1179.00 62.07 A8 8 0 0 1 1183.00 69.00 Z" fill="#f79632" stroke="none" stroke-width="1" />
<path d="M1175 69 L1183.00 69.00 A8 8 0 0 1 1179.00 75.93 Z" fill="#ef5350" stroke="none" stroke-width="1" />
<path d="M1175 69 L1179.00 75.93 A8 8 0 0 1 1171.00 75.93 Z" fill="#8e4de6" stroke="none" stroke-width="1" />
<path d="M1175 69 L1171.00 75.93 A8 8 0 0 1 1167.00 69.00 Z" fill="#1eb4d2" stroke="none" stroke-width="1" />
<path d="M1175 69 L1167.00 69.00 A8 8 0 0 1 1171.00 62.07 Z" fill="#3fc380" stroke="none" stroke-width="1" />
<rect x="1167" y="85" width="16" height="1" fill="#d4d4d4" />
<rect x="1167" y="88" width="16" height="2" fill="#d4d4d4" />
<rect x="1167" y="92" width="16" height="3" fill="#d4d4d4" />
<rect x="1167" y="97" width="16" height="4" fill="#d4d4d4" />
<line x1="1167" y1="110.5" x2="1182.5" y2="110.5" stroke="#d4d4d4" stroke-width="1" stroke-dasharray="1 1"/>
<line x1="1167" y1="113.5" x2="1182.5" y2="113.5" stroke="#d4d4d4" stroke-width="1" stroke-dasharray="3 1"/>
<line x1="1167" y1="116.5" x2="1182.5" y2="116.5" stroke="#d4d4d4" stroke-width="1" stroke-dasharray="16 0"/>
<line x1="1167" y1="119.5" x2="1182.5" y2="119.5" stroke="#d4d4d4" stroke-width="1" stroke-dasharray="2 1 4 1"/>
<line x1="1167" y1="122.5" x2="1182.5" y2="122.5" stroke="#d4d4d4" stroke-width="1" stroke-dasharray="5 1"/>
<rect x="1185.5" y="58.5" width="179" height="21" fill="#4e5a6f" stroke="#333b49" stroke-width="1"/>
<polygon points="1355.5,67.0 1362.5,67.0 1359,71.0" fill="#d0d0d0" stroke="none" stroke-width="1" />
<rect x="1185.5" y="82.5" width="179" height="21" fill="#4e5a6f" stroke="#333b49" stroke-width="1"/>
<polygon points="1355.5,91.0 1362.5,91.0 1359,95.0" fill="#d0d0d0" stroke="none" stroke-width="1" />
<rect x="1185.5" y="106.5" width="179" height="21" fill="#4e5a6f" stroke="#333b49" stroke-width="1"/>
<polygon points="1355.5,115.0 1362.5,115.0 1359,119.0" fill="#d0d0d0" stroke="none" stroke-width="1" />
<rect x="1192" y="61" width="16" height="16" fill="#ffffff" />
<text x="1212" y="73" font-size="12" fill="#e9ebee" textLength="41" lengthAdjust="spacing" >ByLayer</text>
<line x1="1192" y1="92.5" x2="1256" y2="92.5" stroke="#f0f0f0" stroke-width="1" />
<text x="1258" y="97" font-size="12" fill="#e9ebee" textLength="41" lengthAdjust="spacing" >ByLayer</text>
<line x1="1192" y1="117.5" x2="1256" y2="117.5" stroke="#f0f0f0" stroke-width="1" />
<text x="1258" y="121" font-size="12" fill="#e9ebee" textLength="41" lengthAdjust="spacing" >ByLayer</text>
<path d="M1376.5 65.5 H1373.5 V91.5 H1376.5" fill="none" stroke="#e4e4e4" stroke-width="1.3" />
<path d="M1392 75 H1395 V91.5 H1392" fill="none" stroke="#e4e4e4" stroke-width="1.3" />
<rect x="1379.5" y="68.5" width="9.5" height="6.5" fill="#44566d" stroke="#5cb8f5" stroke-width="1.2"/>
<circle cx="1384" cy="84" r="4.6" fill="#6b7280" stroke="#cfcfcf" stroke-width="1.2" />
<polygon points="1396.5,60.5 1397.8,65.36 1402.16,62.84 1399.64,67.2 1404.5,68.5 1399.64,69.8 1402.16,74.16 1397.8,71.64 1396.5,76.5 1395.2,71.64 1390.84,74.16 1393.36,69.8 1388.5,68.5 1393.36,67.2 1390.84,62.84 1395.2,65.36" fill="#fbc95f" stroke="none" stroke-width="1" />
<text x="1373" y="107" font-size="12" fill="#e9ebee" textLength="33.5" lengthAdjust="spacing" >Group</text>
<rect x="1417.0" y="63.5" width="5" height="4" fill="#44566d" stroke="#5cb8f5" stroke-width="1"/>
<circle cx="1419.5" cy="72.3" r="2.6" fill="#6b7280" stroke="#cfcfcf" stroke-width="1" />
<path d="M1424.5 62.5 H1427 V76.5 H1424.5" fill="none" stroke="#e4e4e4" stroke-width="1.1" />
<path d="M1424 66.5 L1429.5 72.5 M1429.5 66.5 L1424 72.5" fill="none" stroke="#e8485a" stroke-width="1.6" />
<path d="M1416.5 85.5 H1414.5 V98.5 H1416.5 M1423 85.5 H1425 V98.5 H1423" fill="none" stroke="#e4e4e4" stroke-width="1.1" />
<rect x="1417.3" y="86" width="5" height="4" fill="#44566d" stroke="#5cb8f5" stroke-width="1"/>
<circle cx="1419.8" cy="94.8" r="2.6" fill="#6b7280" stroke="#cfcfcf" stroke-width="1" />
<polygon points="1422.3,98 1427.2,92.6 1429.5,94.7 1424.6,100.1" fill="#fbd174" stroke="none" stroke-width="1" />
<polygon points="1427.2,92.6 1428.6,91.1 1430.9,93.2 1429.5,94.7" fill="#ee4d5e" stroke="none" stroke-width="1" />
<polygon points="1422.3,98 1424.6,100.1 1421.2,101.2" fill="#f0f0f0" stroke="none" stroke-width="1" />
<rect x="1410.5" y="106.5" width="23" height="21" fill="#44566d" stroke="#69b3ea" stroke-width="1"/>
<path d="M1416.5 109.5 H1414.5 V122.5 H1416.5 M1423 109.5 H1425 V122.5 H1423" fill="none" stroke="#e4e4e4" stroke-width="1.1" />
<rect x="1416.8" y="110" width="5" height="4" fill="#3c6a58" stroke="#59c16d" stroke-width="1"/>
<circle cx="1419.3" cy="118.8" r="2.6" fill="#3c6a58" stroke="#59c16d" stroke-width="1" />
<polygon points="1423,113 1423,124 1425.6,121.6 1427.4,125.4 1429,124.6 1427.2,121 1430.4,120.8" fill="#f4f4f4" stroke="#333" stroke-width="0.4" />
<rect x="1459" y="73" width="28" height="6" fill="#f3c56a" />
<line x1="1461.3333333333333" y1="73" x2="1461.3333333333333" y2="75.5" stroke="#b98a2e" stroke-width="0.9" />
<line x1="1463.6666666666667" y1="73" x2="1463.6666666666667" y2="76.5" stroke="#b98a2e" stroke-width="0.9" />
<line x1="1466.0" y1="73" x2="1466.0" y2="75.5" stroke="#b98a2e" stroke-width="0.9" />
<line x1="1468.3333333333333" y1="73" x2="1468.3333333333333" y2="76.5" stroke="#b98a2e" stroke-width="0.9" />
<line x1="1470.6666666666667" y1="73" x2="1470.6666666666667" y2="75.5" stroke="#b98a2e" stroke-width="0.9" />
<line x1="1473.0" y1="73" x2="1473.0" y2="76.5" stroke="#b98a2e" stroke-width="0.9" />
<line x1="1475.3333333333333" y1="73" x2="1475.3333333333333" y2="75.5" stroke="#b98a2e" stroke-width="0.9" />
<line x1="1477.6666666666667" y1="73" x2="1477.6666666666667" y2="76.5" stroke="#b98a2e" stroke-width="0.9" />
<line x1="1480.0" y1="73" x2="1480.0" y2="75.5" stroke="#b98a2e" stroke-width="0.9" />
<line x1="1482.3333333333333" y1="73" x2="1482.3333333333333" y2="76.5" stroke="#b98a2e" stroke-width="0.9" />
<line x1="1484.6666666666667" y1="73" x2="1484.6666666666667" y2="75.5" stroke="#b98a2e" stroke-width="0.9" />
<text x="1450" y="107" font-size="12" fill="#e9ebee" textLength="45" lengthAdjust="spacing" >Measure</text>
<polygon points="1470.0,113.0 1475.0,113.0 1472.5,116.0" fill="#d0d0d0" stroke="none" stroke-width="1" />
<polygon points="1510.5,65 1510.5,75.5 1513.2,73.2 1515,77 1516.8,76.2 1515,72.5 1518.2,72.3" fill="#f4f4f4" stroke="none" stroke-width="1" />
<polygon points="1519.5,61 1516,66.5 1518.5,66.5 1517,70 1522,64.8 1519.3,64.8 1521.5,61" fill="#fbc95f" stroke="none" stroke-width="1" />
<rect x="1517.5" y="69.5" width="9.5" height="7.5" fill="#f0f0f0" />
<rect x="1519" y="70.8" width="1.2" height="1" fill="#2b7fd0" />
<rect x="1521" y="70.8" width="4.5" height="1" fill="#2b7fd0" />
<rect x="1519" y="72.8" width="1.2" height="1" fill="#2b7fd0" />
<rect x="1521" y="72.8" width="4.5" height="1" fill="#2b7fd0" />
<rect x="1519" y="74.8" width="1.2" height="1" fill="#2b7fd0" />
<rect x="1521" y="74.8" width="4.5" height="1" fill="#2b7fd0" />
<rect x="1511.5" y="85.5" width="14" height="14" fill="none" stroke="#5fe08a" stroke-width="1.1" stroke-dasharray="1.8 1"/>
<rect x="1513" y="90" width="7" height="7.5" fill="#7fd79a" />
<rect x="1516" y="87.5" width="7" height="7.5" fill="#7fd79a" stroke="#3b4453" stroke-width="1"/>
<polygon points="1519.5,90 1519.5,100.5 1522.2,98.2 1524,102 1525.8,101.2 1524,97.5 1527.2,97.3" fill="#f4f4f4" stroke="#333" stroke-width="0.4" />
<rect x="1513" y="109" width="12" height="16" fill="#d8d8d8" />
<rect x="1514.8" y="110.8" width="8.4" height="3" fill="#555" />
<rect x="1514.8" y="115.6" width="2" height="2" fill="#555" />
<rect x="1517.8999999999999" y="115.6" width="2" height="2" fill="#555" />
<rect x="1521.0" y="115.6" width="2" height="2" fill="#555" />
<rect x="1514.8" y="118.69999999999999" width="2" height="2" fill="#555" />
<rect x="1517.8999999999999" y="118.69999999999999" width="2" height="2" fill="#555" />
<rect x="1521.0" y="118.69999999999999" width="2" height="2" fill="#555" />
<rect x="1514.8" y="121.8" width="2" height="2" fill="#555" />
<rect x="1517.8999999999999" y="121.8" width="2" height="2" fill="#555" />
<rect x="1521.0" y="121.8" width="2" height="2" fill="#555" />
<rect x="1548" y="63" width="22" height="25" fill="#dba96a" />
<rect x="1554" y="60.5" width="10" height="3.5" fill="#f0f0f0" rx="1"/>
<rect x="1557.5" y="59.5" width="3" height="2" fill="#f0f0f0" />
<polygon points="1556,70 1568,70 1574,76 1574,92 1556,92" fill="#e2e2e2" stroke="#3b4453" stroke-width="1.2" />
<polygon points="1568,70 1574,76 1568,76" fill="#fafafa" stroke="none" stroke-width="1" />
<text x="1547" y="107" font-size="12" fill="#e9ebee" textLength="28" lengthAdjust="spacing" >Paste</text>
<polygon points="1558.5,113.0 1563.5,113.0 1561,116.0" fill="#d0d0d0" stroke="none" stroke-width="1" />
<rect x="1591" y="61.5" width="12" height="14" fill="#d8d8d8" />
<path d="M1593 64.5 H1600 M1593 67.5 H1598 M1593 70.5 H1597" fill="none" stroke="#666" stroke-width="0.9" />
<path d="M1597 66.5 L1605 74.5 M1605 66.5 L1599 74.5" fill="none" stroke="#f0f0f0" stroke-width="1.2" />
<circle cx="1598.8" cy="76" r="1.8" fill="none" stroke="#f0f0f0" stroke-width="1" />
<circle cx="1605" cy="76" r="1.8" fill="none" stroke="#f0f0f0" stroke-width="1" />
<polygon points="1612.0,68.0 1617.0,68.0 1614.5,71.0" fill="#d0d0d0" stroke="none" stroke-width="1" />
<polygon points="1592,85 1598,85 1598,97 1592,97" fill="#c4c4c4" stroke="none" stroke-width="1" />
<polygon points="1595,88 1601,88 1605,92 1605,101 1595,101" fill="#e2e2e2" stroke="none" stroke-width="1" />
<polygon points="1601,88 1605,92 1601,92" fill="#fafafa" stroke="none" stroke-width="1" />
<line x1="1594.5" y1="87.5" x2="1594.5" y2="101" stroke="#3b4453" stroke-width="1" />
<polygon points="1612.0,92.0 1617.0,92.0 1614.5,95.0" fill="#d0d0d0" stroke="none" stroke-width="1" />
<polygon points="1640,64 1654,64 1654,74 1672,74 1672,88 1640,88" fill="#e2e2e2" stroke="none" stroke-width="1" />
<text x="1644.5" y="107" font-size="12" fill="#e9ebee" textLength="23.5" lengthAdjust="spacing" >Base</text>
<polygon points="1654.0,113.0 1659.0,113.0 1656.5,116.0" fill="#d0d0d0" stroke="none" stroke-width="1" />
<polygon points="70,154 164.5,154 155,178 60,178" fill="#3b4453" stroke="none" stroke-width="1" />
<text x="29" y="170" font-size="12" fill="#e9ebee" textLength="24" lengthAdjust="spacing" >Start</text>
<text x="77.5" y="170" font-size="12" fill="#f4f5f7" textLength="58" lengthAdjust="spacing" font-weight="bold" >Drawing2*</text>
<path d="M145.5 162 L152.5 169.5 M152.5 162 L145.5 169.5" fill="none" stroke="#a6a6a6" stroke-width="2" />
<text x="172" y="170" font-size="12" fill="#e9ebee" textLength="42.5" lengthAdjust="spacing" >Sólidos*</text>
<text x="251" y="170" font-size="12" fill="#e9ebee" textLength="54.5" lengthAdjust="spacing" >Drawing1*</text>
<line x1="234" y1="174" x2="240" y2="158" stroke="#4a5261" stroke-width="1.2" />
<line x1="327" y1="174" x2="333" y2="158" stroke="#4a5261" stroke-width="1.2" />
<line x1="367" y1="174" x2="373" y2="158" stroke="#4a5261" stroke-width="1.2" />
<path d="M344 166 H356 M350 160 V172" fill="none" stroke="#f4f4f4" stroke-width="2" />
<defs><linearGradient id="sph" x1="0" y1="0" x2="0" y2="1"><stop offset="0" stop-color="#494949"/><stop offset="1" stop-color="#373737"/></linearGradient><linearGradient id="spv" x1="0" y1="0" x2="1" y2="0"><stop offset="0" stop-color="#474747"/><stop offset="1" stop-color="#353535"/></linearGradient></defs>
<rect x="52" y="450" width="426" height="5" fill="url(#sph)" />
<rect x="27" y="450" width="4" height="5" fill="url(#sph)" />
<rect x="236" y="451.3" width="10" height="0.8" fill="#8a8a8a" />
<rect x="236" y="453" width="10" height="0.8" fill="#8a8a8a" />
<rect x="52" y="720" width="426" height="5" fill="url(#sph)" />
<rect x="27" y="720" width="4" height="5" fill="url(#sph)" />
<rect x="236" y="721.3" width="10" height="0.8" fill="#8a8a8a" />
<rect x="236" y="723" width="10" height="0.8" fill="#8a8a8a" />
<rect x="4" y="450" width="2" height="5" fill="url(#sph)" />
<rect x="4" y="720" width="23" height="5" fill="url(#sph)" />
<path d="M11.5 722.5 H16.5 M14 720.5 V724.5" fill="none" stroke="#8a8a8a" stroke-width="0.8" />
<line x1="21.5" y1="720.5" x2="21.5" y2="724.5" stroke="#2a2a2a" stroke-width="1" />
<rect x="4" y="178" width="2" height="4" fill="#3f3f3f" />
<rect x="478" y="182" width="5" height="809" fill="url(#spv)" />
<path d="M479 192.5 H483 M481 190.5 V194.5" fill="none" stroke="#8a8a8a" stroke-width="0.8" />
<line x1="478" y1="199.5" x2="483" y2="199.5" stroke="#2c2c2c" stroke-width="1" />
<rect x="479.3" y="309" width="0.8" height="12" fill="#8a8a8a" />
<rect x="481.2" y="309" width="0.8" height="12" fill="#8a8a8a" />
<rect x="479.3" y="581" width="0.8" height="12" fill="#8a8a8a" />
<rect x="481.2" y="581" width="0.8" height="12" fill="#8a8a8a" />
<rect x="479.3" y="853" width="0.8" height="12" fill="#8a8a8a" />
<rect x="481.2" y="853" width="0.8" height="12" fill="#8a8a8a" />
<line x1="5.5" y1="52" x2="5.5" y2="150" stroke="#313947" stroke-width="0.8" />
<path d="M7 54 Q7 51 10 51 H23.5 L26.5 54 V585 Q26.5 588 23.5 588 H10 Q7 588 7 585 Z" fill="#2e3440" stroke="#272d38" stroke-width="0.9"/>
<path d="M13.4 57.6 L20.6 64.8 M20.6 57.6 L13.4 64.8" fill="none" stroke="#d6d6d6" stroke-width="2.2" />
<path d="M13.5 75 V85 M13.5 76.8 H16.2 M13.5 83.2 H16.2" fill="none" stroke="#d6d6d6" stroke-width="1.4" />
<path d="M15.5 80 H19" fill="none" stroke="#d6d6d6" stroke-width="1.6" />
<polygon points="18.2,76.8 21.8,80 18.2,83.2" fill="#d6d6d6" stroke="none" stroke-width="1" />
<line x1="22.3" y1="99.0" x2="11.7" y2="99.0" stroke="#d6d6d6" stroke-width="1.7" />
<line x1="20.7476659402887" y1="102.7476659402887" x2="13.252334059711298" y2="95.2523340597113" stroke="#d6d6d6" stroke-width="1.7" />
<line x1="17.0" y1="104.3" x2="17.0" y2="93.7" stroke="#d6d6d6" stroke-width="1.7" />
<line x1="13.252334059711298" y1="102.7476659402887" x2="20.7476659402887" y2="95.2523340597113" stroke="#d6d6d6" stroke-width="1.7" />
<circle cx="17" cy="99" r="3.2" fill="#d6d6d6" stroke="none" stroke-width="1" />
<circle cx="17" cy="99" r="1.9" fill="#2e3440" stroke="none" stroke-width="1" />
<text x="0" y="0" font-size="13.4" fill="#d0d3d8" transform="translate(22.4 560.5) rotate(-90) scale(0.7314 1)">PROPERTIES</text>
<rect x="11" y="571" width="12" height="16" fill="#f0f0f0" />
<rect x="12.5" y="572.5" width="9" height="6.5" fill="#6cc0f8" />
<path d="M13 581.5 H21 M13 584.5 H21 M16 580 V583 M18.5 583 V586" fill="none" stroke="#555" stroke-width="0.8" />
<path d="M32 273 Q32 270 35 270 H48 Q51 270 51 273 V798 Q51 801 48 801 H35 Q32 801 32 798 Z" fill="#2e3440"/>
<path d="M38.5 276.5 L45.5 283.5 M45.5 276.5 L38.5 283.5" fill="none" stroke="#d6d6d6" stroke-width="2" />
<path d="M38.5 294 V304 M38.5 295.8 H41.2 M38.5 302.2 H41.2" fill="none" stroke="#d6d6d6" stroke-width="1.4" />
<path d="M40.5 299 H44" fill="none" stroke="#d6d6d6" stroke-width="1.6" />
<polygon points="43.2,295.8 46.8,299 43.2,302.2" fill="#d6d6d6" stroke="none" stroke-width="1" />
<line x1="47.3" y1="318.0" x2="36.7" y2="318.0" stroke="#d6d6d6" stroke-width="1.7" />
<line x1="45.747665940288705" y1="321.7476659402887" x2="38.252334059711295" y2="314.2523340597113" stroke="#d6d6d6" stroke-width="1.7" />
<line x1="42.0" y1="323.3" x2="42.0" y2="312.7" stroke="#d6d6d6" stroke-width="1.7" />
<line x1="38.2523340597113" y1="321.7476659402887" x2="45.7476659402887" y2="314.2523340597113" stroke="#d6d6d6" stroke-width="1.7" />
<circle cx="42" cy="318" r="3.2" fill="#d6d6d6" stroke="none" stroke-width="1" />
<circle cx="42" cy="318" r="1.9" fill="#2e3440" stroke="none" stroke-width="1" />
<text x="0" y="0" font-size="13.4" fill="#d0d3d8" transform="translate(47.6 773.5) rotate(-90) scale(0.7783 1)">LAYER PROPERTIES MANAGER</text>
<polygon points="34,789 39,784 46.5,784 41.5,789" fill="#e0e0e0" stroke="none" stroke-width="1" />
<polygon points="34,792.5 35.5,791 42,791 42,792.5" fill="#e0e0e0" stroke="none" stroke-width="1" />
<polygon points="34,796 35.5,794.5 42,794.5 42,796" fill="#e0e0e0" stroke="none" stroke-width="1" />
<rect x="42" y="789" width="8" height="11" fill="#f4f4f4" />
<rect x="43.3" y="790.5" width="5.4" height="4" fill="#4da8f0" />
<path d="M43.5 797.5 H48.5" fill="none" stroke="#444" stroke-width="0.9" />
<polygon points="228.23,220.85 279.31,221.37 321.3,251.46 336.7,300.97 321.3,349.08 279.31,380.05 228.23,379.35 185.89,349.08 170.5,299.75 185.89,251.99" fill="#777a7b" stroke="none" stroke-width="1" />
<polygon points="228.23,220.85 279.31,221.37 268.12,252.86 253.6,300.45 238.73,250.24" fill="#737576" stroke="none" stroke-width="1" />
<polygon points="279.31,221.37 321.3,251.46 296.46,268.08 253.6,300.45 268.12,252.86" fill="#5b5c5e" stroke="none" stroke-width="1" />
<polygon points="321.3,251.46 336.7,300.97 303.81,301.32 253.6,300.45 296.46,268.08" fill="#737677" stroke="none" stroke-width="1" />
<polygon points="336.7,300.97 321.3,349.08 296.46,329.49 253.6,300.45 303.81,301.32" fill="#727475" stroke="none" stroke-width="1" />
<polygon points="321.3,349.08 279.31,380.05 268.12,350.31 253.6,300.45 296.46,329.49" fill="#7b7d7e" stroke="none" stroke-width="1" />
<polygon points="279.31,380.05 228.23,379.35 238.73,347.33 253.6,300.45 268.12,350.31" fill="#58595b" stroke="none" stroke-width="1" />
<polygon points="228.23,379.35 185.89,349.08 210.73,332.81 253.6,300.45 238.73,347.33" fill="#4b4c4e" stroke="none" stroke-width="1" />
<polygon points="185.89,349.08 170.5,299.75 203.39,299.57 253.6,300.45 210.73,332.81" fill="#7b7d7e" stroke="none" stroke-width="1" />
<polygon points="170.5,299.75 185.89,251.99 210.73,271.23 253.6,300.45 203.39,299.57" fill="#747677" stroke="none" stroke-width="1" />
<polygon points="185.89,251.99 228.23,220.85 238.73,250.24 253.6,300.45 210.73,271.23" fill="#7c7e7f" stroke="none" stroke-width="1" />
<polygon points="268.12,252.86 303.81,301.32 268.12,350.31 210.73,332.81 210.73,271.23" fill="#7f8283" stroke="none" stroke-width="1" />
<polygon points="238.73,250.24 296.46,268.08 296.46,329.49 238.73,347.33 203.39,299.57" fill="#7f8283" stroke="none" stroke-width="1" />
<polygon points="210.73,289.32 227.54,265.85 257.85,256.15 274.28,261.23 296.46,291.35 296.46,311.41 279.46,334.74 248.48,344.32 233.01,339.6 210.73,309.5" fill="#8e9192" stroke="none" stroke-width="1" />
<polygon points="268.12,252.86 303.81,301.32 268.12,350.31 210.73,332.81 210.73,271.23" fill="none" stroke="#eceded" stroke-width="0.9" />
<polygon points="238.73,250.24 296.46,268.08 296.46,329.49 238.73,347.33 203.39,299.57" fill="none" stroke="#d0d2d3" stroke-width="0.8" />
<line x1="228.23" y1="220.85" x2="238.73" y2="250.24" stroke="#d8dada" stroke-width="0.9" />
<line x1="279.31" y1="221.37" x2="268.12" y2="252.86" stroke="#eceded" stroke-width="0.9" />
<line x1="321.3" y1="251.46" x2="296.46" y2="268.08" stroke="#d8dada" stroke-width="0.9" />
<line x1="336.7" y1="300.97" x2="303.81" y2="301.32" stroke="#eceded" stroke-width="0.9" />
<line x1="321.3" y1="349.08" x2="296.46" y2="329.49" stroke="#d8dada" stroke-width="0.9" />
<line x1="279.31" y1="380.05" x2="268.12" y2="350.31" stroke="#eceded" stroke-width="0.9" />
<line x1="228.23" y1="379.35" x2="238.73" y2="347.33" stroke="#d8dada" stroke-width="0.9" />
<line x1="185.89" y1="349.08" x2="210.73" y2="332.81" stroke="#eceded" stroke-width="0.9" />
<line x1="170.5" y1="299.75" x2="203.39" y2="299.57" stroke="#d8dada" stroke-width="0.9" />
<line x1="185.89" y1="251.99" x2="210.73" y2="271.23" stroke="#eceded" stroke-width="0.9" />
<polygon points="228.23,220.85 279.31,221.37 321.3,251.46 336.7,300.97 321.3,349.08 279.31,380.05 228.23,379.35 185.89,349.08 170.5,299.75 185.89,251.99" fill="none" stroke="#f6f6f6" stroke-width="1.1" />
<polygon points="188.87,520.24 282.15,520.24 322.89,602.48 292.26,653.48 198.97,653.48 158.08,571.54" fill="#7b7e7f" stroke="none" stroke-width="1" />
<line x1="224.63" y1="520.24" x2="215.3" y2="571.85" stroke="#f2f2f2" stroke-width="0.9" />
<line x1="215.3" y1="571.85" x2="174.56" y2="602.17" stroke="#f2f2f2" stroke-width="0.9" />
<line x1="215.3" y1="571.85" x2="265.83" y2="602.17" stroke="#f2f2f2" stroke-width="0.9" />
<line x1="265.83" y1="602.17" x2="306.25" y2="571.85" stroke="#f2f2f2" stroke-width="0.9" />
<line x1="265.83" y1="602.17" x2="256.5" y2="653.48" stroke="#f2f2f2" stroke-width="0.9" />
<polygon points="188.87,520.24 282.15,520.24 322.89,602.48 292.26,653.48 198.97,653.48 158.08,571.54" fill="none" stroke="#f8f8f8" stroke-width="1.1" />
<polygon points="191.2,790.57 210.32,790.57 191.67,842.19 176.74,857.74 161.35,841.41" fill="#7b7e7f" stroke="#7b7e7f" stroke-width="0.4" />
<polygon points="210.32,790.57 240.49,790.57 240.49,842.19 216.85,857.74 191.67,842.19" fill="#8e9192" stroke="#8e9192" stroke-width="0.4" />
<polygon points="240.49,790.57 270.49,790.57 289.46,842.19 264.27,857.74 240.49,842.19" fill="#7b7e7f" stroke="#7b7e7f" stroke-width="0.4" />
<polygon points="270.49,790.57 289.61,790.57 319.78,841.41 304.38,857.74 289.46,842.19" fill="#737677" stroke="#737677" stroke-width="0.4" />
<polygon points="161.35,841.41 176.74,857.74 161.35,874.37" fill="#6b6e6f" stroke="#6b6e6f" stroke-width="0.4" />
<polygon points="319.78,841.41 304.38,857.74 319.78,874.37" fill="#66696a" stroke="#66696a" stroke-width="0.4" />
<polygon points="176.74,857.74 191.67,842.19 216.85,857.74 191.67,873.75" fill="#8e9192" stroke="#8e9192" stroke-width="0.4" />
<polygon points="216.85,857.74 240.49,842.19 264.27,857.74 240.49,873.75" fill="#737677" stroke="#737677" stroke-width="0.4" />
<polygon points="264.27,857.74 289.46,842.19 304.38,857.74 289.46,873.75" fill="#8e9192" stroke="#8e9192" stroke-width="0.4" />
<polygon points="161.35,874.37 176.74,857.74 191.67,873.75 210.32,925.37 191.2,925.37" fill="#6b6e6f" stroke="#6b6e6f" stroke-width="0.4" />
<polygon points="191.67,873.75 216.85,857.74 240.49,873.75 240.49,925.37 210.32,925.37" fill="#777a7b" stroke="#777a7b" stroke-width="0.4" />
<polygon points="240.49,873.75 264.27,857.74 289.46,873.75 270.49,925.37 240.49,925.37" fill="#8e9192" stroke="#8e9192" stroke-width="0.4" />
<polygon points="289.46,873.75 304.38,857.74 319.78,874.37 289.61,925.37 270.49,925.37" fill="#8a8d8e" stroke="#8a8d8e" stroke-width="0.4" />
<line x1="210.32" y1="790.57" x2="191.67" y2="842.19" stroke="#eeeeee" stroke-width="0.9" />
<line x1="240.49" y1="790.57" x2="240.49" y2="842.19" stroke="#eeeeee" stroke-width="0.9" />
<line x1="270.49" y1="790.57" x2="289.46" y2="842.19" stroke="#eeeeee" stroke-width="0.9" />
<line x1="210.32" y1="925.37" x2="191.67" y2="873.75" stroke="#eeeeee" stroke-width="0.9" />
<line x1="240.49" y1="925.37" x2="240.49" y2="873.75" stroke="#eeeeee" stroke-width="0.9" />
<line x1="270.49" y1="925.37" x2="289.46" y2="873.75" stroke="#eeeeee" stroke-width="0.9" />
<line x1="161.35" y1="841.41" x2="191.67" y2="873.75" stroke="#eeeeee" stroke-width="0.9" />
<line x1="161.35" y1="874.37" x2="191.67" y2="842.19" stroke="#eeeeee" stroke-width="0.9" />
<line x1="319.78" y1="841.41" x2="289.46" y2="873.75" stroke="#eeeeee" stroke-width="0.9" />
<line x1="319.78" y1="874.37" x2="289.46" y2="842.19" stroke="#eeeeee" stroke-width="0.9" />
<line x1="191.67" y1="842.19" x2="240.49" y2="873.75" stroke="#eeeeee" stroke-width="0.9" />
<line x1="191.67" y1="873.75" x2="240.49" y2="842.19" stroke="#eeeeee" stroke-width="0.9" />
<line x1="240.49" y1="842.19" x2="289.46" y2="873.75" stroke="#eeeeee" stroke-width="0.9" />
<line x1="240.49" y1="873.75" x2="289.46" y2="842.19" stroke="#eeeeee" stroke-width="0.9" />
<polygon points="191.2,790.57 289.61,790.57 319.78,841.41 319.78,874.37 289.61,925.37 191.2,925.37 161.35,874.37 161.35,841.41" fill="none" stroke="#f8f8f8" stroke-width="1.1" />
<circle cx="447" cy="211.3" r="20" fill="none" stroke="#3a4049" stroke-width="4.6" />
<rect x="437" y="201" width="20" height="20" fill="#5b6068" />
<text x="0" y="0" font-size="6.5" fill="#70747c" font-weight="bold" text-anchor="middle" transform="translate(447 191) rotate(0) translate(0 2.3)">E</text>
<text x="0" y="0" font-size="6.5" fill="#70747c" font-weight="bold" text-anchor="middle" transform="translate(467.5 211.3) rotate(90) translate(0 2.3)">S</text>
<text x="0" y="0" font-size="6.5" fill="#70747c" font-weight="bold" text-anchor="middle" transform="translate(447 231.8) rotate(180) translate(0 2.3)">W</text>
<text x="0" y="0" font-size="6.5" fill="#70747c" font-weight="bold" text-anchor="middle" transform="translate(426.5 211.3) rotate(270) translate(0 2.3)">N</text>
<text x="447" y="213" font-size="4" fill="#4a4f57" text-anchor="middle" >TOP</text>
<rect x="423.3" y="245.8" width="47" height="16.8" fill="#525760" rx="4"/>
<text x="427.5" y="258.0" font-size="11" fill="#444952" textLength="23" lengthAdjust="spacing" >WCS</text>
<polygon points="458.55,251.9 464.05,251.9 461.3,254.9" fill="#626771" stroke="none" stroke-width="1" />
<rect x="424" y="517.4" width="47" height="16.8" fill="#525760" rx="4"/>
<text x="428.2" y="529.6" font-size="11" fill="#444952" textLength="23" lengthAdjust="spacing" >WCS</text>
<polygon points="459.25,523.5 464.75,523.5 462,526.5" fill="#626771" stroke="none" stroke-width="1" />
<rect x="423.3" y="788.7" width="47" height="16.8" fill="#525760" rx="4"/>
<text x="427.5" y="800.9000000000001" font-size="11" fill="#444952" textLength="23" lengthAdjust="spacing" >WCS</text>
<polygon points="458.55,794.8 464.05,794.8 461.3,797.8" fill="#626771" stroke="none" stroke-width="1" />
<rect x="437" y="475" width="20" height="20" fill="#5b6068" />
<text x="447" y="487" font-size="5" fill="#42464e" font-weight="bold" text-anchor="middle" >RIGHT</text>
<line x1="422" y1="495.5" x2="432.5" y2="495.5" stroke="#3a4049" stroke-width="0.9" />
<line x1="461.5" y1="495.5" x2="472.5" y2="495.5" stroke="#3a4049" stroke-width="0.9" />
<line x1="433.5" y1="497.5" x2="460.5" y2="497.5" stroke="#3a4049" stroke-width="0.9" />
<line x1="444" y1="497.5" x2="450" y2="497.5" stroke="#8a8d92" stroke-width="0.9" />
<rect x="437" y="745" width="20" height="20" fill="#5b6068" />
<text x="447" y="757" font-size="5" fill="#42464e" font-weight="bold" text-anchor="middle" >FRONT</text>
<line x1="422" y1="765.5" x2="432.5" y2="765.5" stroke="#3a4049" stroke-width="0.9" />
<line x1="461.5" y1="765.5" x2="472.5" y2="765.5" stroke="#3a4049" stroke-width="0.9" />
<line x1="433.5" y1="767.5" x2="460.5" y2="767.5" stroke="#3a4049" stroke-width="0.9" />
<line x1="444" y1="767.5" x2="450" y2="767.5" stroke="#8a8d92" stroke-width="0.9" />
<rect x="485.75" y="184.7" width="1422.85" height="803.8" fill="none" stroke="#0e3864" stroke-width="3.7" stroke-opacity="0.85"/>
<rect x="485.75" y="184.7" width="1422.85" height="803.8" fill="none" stroke="#0a79ea" stroke-width="1.75"/>
<text x="488" y="199" font-size="12" fill="#f0f0f0" textLength="179" lengthAdjust="spacing" >[+][Custom View][Shades of Gray]</text>
<rect x="1852" y="197" width="10.3" height="3" fill="#f2f2f2" />
<path d="M1875 191.8 H1881.2 V198" fill="none" stroke="#f2f2f2" stroke-width="2" />
<rect x="1873" y="194" width="6.3" height="6" fill="#212830" stroke="#f2f2f2" stroke-width="2.1"/>
<path d="M1892.2 192.2 L1900.9 200.2 M1900.9 192.2 L1892.2 200.2" fill="none" stroke="#f2f2f2" stroke-width="2.7" />
<polygon points="1115.3,309.5 1275.7,353.8 1217.5,427.1 1020.2,427.1 958.2,355" fill="#686868" stroke="#686868" stroke-width="0.5" />
<polygon points="958.2,355 1020.2,427.1 960.8,614.2 860.8,656.8 858.5,497.2" fill="#878987" stroke="#878987" stroke-width="0.5" />
<polygon points="1020.2,427.1 1217.5,427.1 1277.6,613.3 1120.2,727.9 960.8,614.2" fill="#828483" stroke="#828483" stroke-width="0.5" />
<polygon points="1275.7,353.8 1373.8,494.6 1375.7,655 1277.6,613.3 1217.5,427.1" fill="#454545" stroke="#454545" stroke-width="0.5" />
<polygon points="960.8,614.2 1120.2,727.9 1119.3,842.4 957.6,797.5 860.8,656.8" fill="#282928" stroke="#282928" stroke-width="0.5" />
<polygon points="1120.2,727.9 1277.6,613.3 1375.7,655 1277,797 1119.3,842.4" fill="#4f4f4f" stroke="#4f4f4f" stroke-width="0.5" />
<line x1="958.2" y1="355" x2="1020.2" y2="427.1" stroke="#f4f4f4" stroke-width="1.1" />
<line x1="1275.7" y1="353.8" x2="1217.5" y2="427.1" stroke="#f4f4f4" stroke-width="1.1" />
<line x1="1020.2" y1="427.1" x2="1217.5" y2="427.1" stroke="#f4f4f4" stroke-width="1.1" />
<line x1="1217.5" y1="427.1" x2="1277.6" y2="613.3" stroke="#f4f4f4" stroke-width="1.1" />
<line x1="1277.6" y1="613.3" x2="1120.2" y2="727.9" stroke="#f4f4f4" stroke-width="1.1" />
<line x1="1120.2" y1="727.9" x2="960.8" y2="614.2" stroke="#f4f4f4" stroke-width="1.1" />
<line x1="960.8" y1="614.2" x2="1020.2" y2="427.1" stroke="#f4f4f4" stroke-width="1.1" />
<line x1="960.8" y1="614.2" x2="860.8" y2="656.8" stroke="#f4f4f4" stroke-width="1.1" />
<line x1="1277.6" y1="613.3" x2="1375.7" y2="655" stroke="#f4f4f4" stroke-width="1.1" />
<line x1="1120.2" y1="727.9" x2="1119.3" y2="842.4" stroke="#f4f4f4" stroke-width="1.1" />
<polygon points="1115.3,309.5 1275.7,353.8 1373.8,494.6 1375.7,655 1277,797 1119.3,842.4 957.6,797.5 860.8,656.8 858.5,497.2 958.2,355" fill="none" stroke="#ffffff" stroke-width="2" stroke-linejoin="round"/>
<rect x="956.6" y="754" width="5" height="44" fill="#4470b6" />
<rect x="957.4" y="754" width="1.6" height="44" fill="#7ea5e6" />
<path d="M957.5 738.5 H969.5 L957.5 750.5 H969.5" fill="none" stroke="#2a7cf0" stroke-width="1.2" />
<line x1="962" y1="795.5" x2="987" y2="783.5" stroke="#357a35" stroke-width="5" stroke-linecap="round"/>
<line x1="962" y1="794.6" x2="987" y2="782.6" stroke="#4c964c" stroke-width="1.2" stroke-linecap="round"/>
<path d="M985.5 767 L991 773 L996.5 767 M991 773 V779" fill="none" stroke="#2fa83a" stroke-width="1.1" />
<line x1="958.5" y1="799.5" x2="998.5" y2="810.5" stroke="#d86a72" stroke-width="4.4" stroke-linecap="round"/>
<line x1="958.5" y1="798.6" x2="998.5" y2="809.6" stroke="#f0a0a4" stroke-width="1.2" stroke-linecap="round"/>
<path d="M996.5 793 L1008.5 805 M1008.5 793 L996.5 805" fill="none" stroke="#e0353f" stroke-width="1.1" />
<line x1="1728.5" y1="604" x2="1728.5" y2="703" stroke="#8484f2" stroke-width="1.1" />
<line x1="1709.2" y1="680.5" x2="1769.8" y2="648.1" stroke="#6cee6c" stroke-width="1.1" />
<line x1="1700.1" y1="662.5" x2="1786.9" y2="685.6" stroke="#f08484" stroke-width="1.1" />
<rect x="1725.6" y="666.3" width="6.2" height="6.2" fill="#212830" stroke="#ffffff" stroke-width="1.1"/>
<ellipse cx="1830" cy="318" rx="64.5" ry="29.5" fill="#444952" stroke="none" stroke-width="1" />
<ellipse cx="1830" cy="318" rx="51" ry="20" fill="#23272e" stroke="none" stroke-width="1" />
<defs><radialGradient id="vcg"><stop offset="0" stop-color="#17191d"/><stop offset="1" stop-color="#23272e"/></radialGradient></defs>
<ellipse cx="1832" cy="318" rx="40" ry="16" fill="url(#vcg)" stroke="none" stroke-width="1" />
<polygon points="1795.1,266.4 1824.7,254.3 1863.5,262.6 1836.3,276.5" fill="#abacae" stroke="none" stroke-width="1" />
<polygon points="1795.1,266.4 1836.3,276.5 1836.3,324 1796.7,311.5" fill="#a0a1a3" stroke="none" stroke-width="1" />
<polygon points="1836.3,276.5 1863.5,262.6 1862,306.9 1836.3,324" fill="#98999b" stroke="none" stroke-width="1" />
<line x1="1836.3" y1="277" x2="1836.3" y2="324" stroke="#6c6e72" stroke-width="1" stroke-dasharray="5 2"/>
<path d="M1795.5 266.5 L1836.3 276.5 L1863.5 262.8" fill="none" stroke="#7a7c80" stroke-width="0.8" stroke-dasharray="4 2"/>
<rect x="1828.5" y="273.5" width="11" height="11" fill="#b9c0c8" fill-opacity="0.8"/>
<text x="0" y="0" font-size="13.5" fill="#575a61" font-weight="bold" transform="translate(1801.8 296.6) skewY(16) scale(0.615 1)">FRONT</text>
<text x="0" y="0" font-size="12.5" fill="#575a61" font-weight="bold" transform="translate(1841 302.6) skewY(-29.5) scale(0.47 1)">RIGHT</text>
<text x="0" y="0" font-size="9" fill="#6a6d73" font-weight="bold" font-style="italic" transform="translate(1822.5 263) rotate(9) scale(0.85 0.5)">TOP</text>
<text x="0" y="0" font-size="12" fill="#a9abaf" font-weight="bold" text-anchor="middle" transform="translate(1786 302.5) rotate(-14) skewX(-28) scale(1.45 0.95)">W</text>
<text x="0" y="0" font-size="13" fill="#a9abaf" font-weight="bold" text-anchor="middle" transform="translate(1790 343.5) rotate(14) skewX(-22) scale(1.7 0.95)">S</text>
<text x="0" y="0" font-size="13" fill="#a9abaf" font-weight="bold" text-anchor="middle" transform="translate(1883.5 336) rotate(-20) skewX(28) scale(1.6 0.95)">E</text>
<line x1="1864" y1="294" x2="1869" y2="291.5" stroke="#a9abaf" stroke-width="1.5" />
<rect x="1806" y="374.5" width="48" height="17" fill="#999dab" rx="4"/>
<rect x="1807" y="375.5" width="46" height="15" fill="none" rx="3.5" stroke="#b4b8c4" stroke-width="0.8"/>
<text x="1811" y="387" font-size="10.5" fill="#5a5e69" textLength="23.5" lengthAdjust="spacing" >WCS</text>
<polygon points="1840.5,380 1848.5,380 1844.5,385" fill="none" stroke="#c4c8d2" stroke-width="0.9" />
<path d="M1880 417 H1907 V629 H1880 Q1877 629 1877 626 V420 Q1877 417 1880 417 Z" fill="#565a61"/>
<circle cx="1903" cy="421.5" r="2.3" fill="none" stroke="#43474e" stroke-width="0.8" />
<path d="M1901.6 420.1 L1904.4 422.9 M1904.4 420.1 L1901.6 422.9" fill="none" stroke="#43474e" stroke-width="0.7" />
<path d="M1892 437 H1903.5 V447 A11.5 11.5 0 1 1 1892 437 Z" fill="none" stroke="#43474e" stroke-width="1.2" />
<circle cx="1892.5" cy="447" r="6" fill="none" stroke="#43474e" stroke-width="1.2" />
<path d="M1884.5 452.5 L1888 450 M1900 452.5 L1897 450 M1892.5 441 V437" fill="none" stroke="#43474e" stroke-width="1" />
<polygon points="1890.5,465.5 1895.5,465.5 1893,468.5" fill="#43474e" stroke="none" stroke-width="1" />
<line x1="1880" y1="473.5" x2="1906" y2="473.5" stroke="#5e6269" stroke-width="1" />
<path d="M1883 492 C1880 488 1884 486 1887 490 V480.5 Q1888.3 478.5 1889.6 480.5 V488 V478.5 Q1891 476.5 1892.4 478.5 V488 V479.5 Q1893.8 477.5 1895.2 479.5 V489 V483 Q1896.6 481 1898 483 V492 Q1898 500 1892 500 Q1887 500 1883 492 Z" fill="none" stroke="#43474e" stroke-width="1.1" />
<path d="M1882 507 L1895 520 M1896 507 L1883 520" fill="none" stroke="#43474e" stroke-width="1.1" />
<polygon points="1881,506 1885,506.5 1881.5,510" fill="#43474e" stroke="none" stroke-width="1" />
<polygon points="1897,506 1893,506.5 1896.5,510" fill="#43474e" stroke="none" stroke-width="1" />
<polygon points="1881,521 1885,520.5 1881.5,517" fill="#43474e" stroke="none" stroke-width="1" />
<circle cx="1897.5" cy="521.5" r="4" fill="#565a61" stroke="#43474e" stroke-width="1.2" />
<line x1="1900.5" y1="524.5" x2="1904.5" y2="528.5" stroke="#43474e" stroke-width="2" />
<polygon points="1890.5,535.5 1895.5,535.5 1893,538.5" fill="#43474e" stroke="none" stroke-width="1" />
<ellipse cx="1892.5" cy="557" rx="10.5" ry="4" fill="none" stroke="#43474e" stroke-width="1.1" />
<path d="M1890.5 565 V552 H1888 L1892.5 545 L1897 552 H1894.5 V565 Z" fill="#565a61" stroke="#43474e" stroke-width="1" />
<polygon points="1884,560.5 1888,557.5 1888,563" fill="#43474e" stroke="none" stroke-width="1" />
<polygon points="1890.5,573.5 1895.5,573.5 1893,576.5" fill="#43474e" stroke="none" stroke-width="1" />
<line x1="1880" y1="581.5" x2="1906" y2="581.5" stroke="#5e6269" stroke-width="1" />
<rect x="1881.5" y="587" width="6" height="5.5" fill="none" stroke="#43474e" stroke-width="0.9"/>
<rect x="1889.5" y="587" width="6" height="5.5" fill="none" stroke="#43474e" stroke-width="0.9"/>
<rect x="1897.5" y="587" width="6" height="5.5" fill="none" stroke="#43474e" stroke-width="0.9"/>
<rect x="1881.5" y="595.5" width="16" height="12.5" fill="none" stroke="#43474e" stroke-width="1"/>
<polygon points="1886,598 1894,602 1886,606" fill="#43474e" stroke="none" stroke-width="1" />
<circle cx="1903" cy="622.5" r="2.5" fill="none" stroke="#43474e" stroke-width="0.8" />
<line x1="1901.5" y1="622.5" x2="1904.5" y2="622.5" stroke="#43474e" stroke-width="0.8" />
<rect x="1906.6" y="416" width="4" height="214" fill="#0d3f75" fill-opacity="0.9"/>
<rect x="1907.6" y="416" width="2" height="214" fill="#0a79ea" />
<rect x="400" y="928.5" width="25" height="62.5" fill="#2a303b" rx="2"/>
<rect x="404.0" y="933.2" width="1.7" height="1.7" fill="#f0f0f0" />
<rect x="404.0" y="936.3" width="1.7" height="1.7" fill="#f0f0f0" />
<rect x="407.05" y="933.2" width="1.7" height="1.7" fill="#f0f0f0" />
<rect x="407.05" y="936.3" width="1.7" height="1.7" fill="#f0f0f0" />
<rect x="410.1" y="933.2" width="1.7" height="1.7" fill="#f0f0f0" />
<rect x="410.1" y="936.3" width="1.7" height="1.7" fill="#f0f0f0" />
<rect x="413.15" y="933.2" width="1.7" height="1.7" fill="#f0f0f0" />
<rect x="413.15" y="936.3" width="1.7" height="1.7" fill="#f0f0f0" />
<rect x="416.2" y="933.2" width="1.7" height="1.7" fill="#f0f0f0" />
<rect x="416.2" y="936.3" width="1.7" height="1.7" fill="#f0f0f0" />
<rect x="419.25" y="933.2" width="1.7" height="1.7" fill="#f0f0f0" />
<rect x="419.25" y="936.3" width="1.7" height="1.7" fill="#f0f0f0" />
<path d="M407.6 946.8 L416.4 955.6 M416.4 946.8 L407.6 955.6" fill="none" stroke="#cccccc" stroke-width="1.7" />
<path d="M405.6 981.6 L413.4 973.8" fill="none" stroke="#b8b8b8" stroke-width="3" stroke-linecap="round"/>
<path d="M416.8 968.6 A4.2 4.2 0 1 0 419 973.2 L415.6 974.2 L413.4 972 Z" fill="#b8b8b8" stroke="none" stroke-width="1" />
<rect x="425" y="929" width="1090" height="41" fill="#9c9d9e" />
<rect x="425" y="970" width="1090" height="1" fill="#3c3c3c" />
<rect x="425" y="971" width="1090" height="20" fill="#c3c4c5" />
<rect x="484" y="929" width="1" height="62" fill="#8fb6e0" fill-opacity="0.35"/>
<rect x="485" y="929" width="2" height="41" fill="#7fb1ea" fill-opacity="0.8"/>
<rect x="485" y="971" width="2" height="18" fill="#a9d0fa" fill-opacity="0.9"/>
<rect x="487" y="987.5" width="1028" height="2.5" fill="#a9d0fa" fill-opacity="0.9"/>
<rect x="425" y="971" width="59" height="20" fill="#b4b5b6" fill-opacity="0.5"/>
<text x="427" y="950" font-size="11.7" fill="#0a0a0a" textLength="133" lengthAdjust="spacing" font-family="'Liberation Mono','DejaVu Sans Mono',monospace" stroke="#0a0a0a" stroke-width="0.14">Command: _vscurrent</text>
<text x="427" y="965" font-size="11.7" fill="#0a0a0a" textLength="987" lengthAdjust="spacing" font-family="'Liberation Mono','DejaVu Sans Mono',monospace" stroke="#0a0a0a" stroke-width="0.14">Enter an option [2dwireframe/Wireframe/Hidden/Realistic/Conceptual/Shaded/shaded with Edges/shades of Gray/SKetchy/X-ray/Other] &lt;Sketchy&gt;: _g</text>
<rect x="429.5" y="975.5" width="15" height="11" fill="none" stroke="#555" stroke-width="1"/>
<rect x="429.5" y="975.5" width="15" height="2" fill="#555" />
<path d="M432 980 L434.5 982 L432 984 M436 984.5 H439.5" fill="none" stroke="#444" stroke-width="0.9" />
<polygon points="447.25,978.2 454.75,978.2 451,982.6" fill="#505050" stroke="none" stroke-width="1" />
<text x="462" y="984.5" font-size="11.7" fill="#777" textLength="96" lengthAdjust="spacing" font-style="italic" font-family="'Liberation Mono','DejaVu Sans Mono',monospace" >Type a command</text>
<polygon points="1503.5,983 1510.5,983 1507,979.5" fill="#555" stroke="none" stroke-width="1" />
<polygon points="22,996 81.5,996 71.5,1020 12,1020" fill="#3b4453" stroke="none" stroke-width="1" />
<text x="29.5" y="1012.7" font-size="12" fill="#f6f6f8" textLength="34.5" lengthAdjust="spacing" font-weight="bold" >Model</text>
<text x="88" y="1012.7" font-size="12" fill="#e9ebee" textLength="41" lengthAdjust="spacing" >Layout1</text>
<text x="154" y="1012.7" font-size="12" fill="#e9ebee" textLength="42" lengthAdjust="spacing" >Layout2</text>
<line x1="138.3" y1="1016" x2="144.7" y2="1000" stroke="#4a5261" stroke-width="1.2" />
<line x1="204.3" y1="1016" x2="210.7" y2="1000" stroke="#4a5261" stroke-width="1.2" />
<line x1="244.3" y1="1016" x2="250.7" y2="1000" stroke="#4a5261" stroke-width="1.2" />
<path d="M222 1008 H234 M228 1002 V1014" fill="none" stroke="#f4f4f4" stroke-width="2" />
<rect x="1344" y="998" width="47" height="24" fill="#3b4453" />
<rect x="1394" y="998" width="64" height="24" fill="#3b4453" />
<rect x="1461" y="998" width="169" height="24" fill="#3b4453" />
<rect x="1633" y="998" width="106" height="24" fill="#3b4453" />
<rect x="1742" y="998" width="40" height="24" fill="#3b4453" />
<rect x="1783.5" y="998" width="23.5" height="24" fill="#3b4453" />
<rect x="1810" y="998" width="24" height="24" fill="#3b4453" />
<rect x="1837" y="998" width="22" height="24" fill="#3b4453" />
<rect x="1862" y="998" width="48" height="24" fill="#3b4453" />
<text x="1347.5" y="1014.5" font-size="12" fill="#e9ebee" textLength="40.5" lengthAdjust="spacing" >MODEL</text>
<path d="M1399 1005.5 H1412 M1399 1009.5 H1412 M1399 1013.5 H1412 M1401.5 1003 V1016.5 M1405.5 1003 V1016.5 M1409.5 1003 V1016.5" fill="none" stroke="#e6e6e6" stroke-width="1" />
<rect x="1424" y="1004" width="2" height="2" fill="#e6e6e6" />
<rect x="1424" y="1009" width="2" height="2" fill="#e6e6e6" />
<rect x="1424" y="1014" width="2" height="2" fill="#e6e6e6" />
<rect x="1429" y="1004" width="2" height="2" fill="#e6e6e6" />
<rect x="1429" y="1009" width="2" height="2" fill="#e6e6e6" />
<rect x="1429" y="1014" width="2" height="2" fill="#e6e6e6" />
<rect x="1434" y="1004" width="2" height="2" fill="#e6e6e6" />
<rect x="1434" y="1009" width="2" height="2" fill="#e6e6e6" />
<rect x="1434" y="1014" width="2" height="2" fill="#e6e6e6" />
<polygon points="1446.5,1008.0 1453.5,1008.0 1450,1012.0" fill="#d0d0d0" stroke="none" stroke-width="1" />
<path d="M1465.5 1002 V1017.5 H1481 M1465.5 1012.5 H1470.5 V1017.5" fill="none" stroke="#e6e6e6" stroke-width="1" />
<circle cx="1496" cy="1010.5" r="6.3" fill="none" stroke="#e6e6e6" stroke-width="1.1" />
<path d="M1496 1010.5 H1505 M1496 1010.5 L1503 1003" fill="none" stroke="#e6e6e6" stroke-width="1.1" />
<polygon points="1513.5,1008.0 1520.5,1008.0 1517,1012.0" fill="#d0d0d0" stroke="none" stroke-width="1" />
<line x1="1530" y1="1003" x2="1542" y2="1016" stroke="#e0525a" stroke-width="1.1" />
<line x1="1536.5" y1="1002" x2="1536.5" y2="1017" stroke="#48c568" stroke-width="1.1" />
<rect x="1535.2" y="1008.2" width="2.6" height="2.6" fill="#3b4453" stroke="#e6e6e6" stroke-width="0.8"/>
<polygon points="1553.0,1008.0 1560.0,1008.0 1556.5,1012.0" fill="#d0d0d0" stroke="none" stroke-width="1" />
<rect x="1567" y="999" width="22" height="22" fill="#5e8dc5" />
<path d="M1570 1015.5 H1586 M1570 1015.5 L1582 1004" fill="none" stroke="#fff" stroke-width="1.1" />
<rect x="1575" y="1008" width="3" height="3" fill="#fff" />
<rect x="1591" y="999" width="22" height="22" fill="#5e8dc5" />
<rect x="1596.5" y="1004.5" width="13" height="13" fill="none" stroke="#fff" stroke-width="1.2"/>
<rect x="1594.5" y="1002.5" width="4.5" height="4.5" fill="#5e8dc5" stroke="#fff" stroke-width="1.1"/>
<polygon points="1618.5,1008.0 1625.5,1008.0 1622,1012.0" fill="#d0d0d0" stroke="none" stroke-width="1" />
<rect x="1634" y="999" width="22" height="22" fill="#5e8dc5" />
<polygon points="1644,1002.3 1645.3,1005.8 1646.9,1009.5 1646.2,1010.9 1650.8,1017.5 1645.8,1016.5 1644,1013.5 1642.2,1016.5 1637.2,1017.5 1641.8,1010.9 1641.1,1009.5 1642.7,1005.8" fill="#fff" stroke="none" stroke-width="1" />
<circle cx="1650.3" cy="1006" r="2.2" fill="none" stroke="#fff" stroke-width="1" />
<polygon points="1667.5,1002.3 1668.8,1005.8 1670.4,1009.5 1669.7,1010.9 1674.3,1017.5 1669.3,1016.5 1667.5,1013.5 1665.7,1016.5 1660.7,1017.5 1665.3,1010.9 1664.6,1009.5 1666.2,1005.8" fill="#d4d4d4" stroke="none" stroke-width="1" />
<polygon points="1675,1002 1671.5,1007 1673.8,1007 1672.5,1010.5 1677,1005.5 1674.6,1005.5 1677,1002" fill="#cfcfcf" stroke="none" stroke-width="1" />
<polygon points="1693,1002.3 1694.3,1005.8 1695.9,1009.5 1695.2,1010.9 1699.8,1017.5 1694.8,1016.5 1693,1013.5 1691.2,1016.5 1686.2,1017.5 1690.8,1010.9 1690.1,1009.5 1691.7,1005.8" fill="#d4d4d4" stroke="none" stroke-width="1" />
<text x="0" y="0" font-size="12" fill="#e9ebee" font-weight="bold" transform="translate(1709.7 1014.2) scale(0.73 1)">1:1</text>
<polygon points="1727.5,1008.0 1734.5,1008.0 1731,1012.0" fill="#d0d0d0" stroke="none" stroke-width="1" />
<line x1="1757.5" y1="1010.0" x2="1761.0" y2="1010.0" stroke="#e6e6e6" stroke-width="3" />
<line x1="1756.3284271247462" y1="1012.8284271247462" x2="1758.803300858899" y2="1015.3033008588991" stroke="#e6e6e6" stroke-width="3" />
<line x1="1753.5" y1="1014.0" x2="1753.5" y2="1017.5" stroke="#e6e6e6" stroke-width="3" />
<line x1="1750.6715728752538" y1="1012.8284271247462" x2="1748.196699141101" y2="1015.3033008588991" stroke="#e6e6e6" stroke-width="3" />
<line x1="1749.5" y1="1010.0" x2="1746.0" y2="1010.0" stroke="#e6e6e6" stroke-width="3" />
<line x1="1750.6715728752538" y1="1007.1715728752538" x2="1748.196699141101" y2="1004.6966991411009" stroke="#e6e6e6" stroke-width="3" />
<line x1="1753.5" y1="1006.0" x2="1753.5" y2="1002.5" stroke="#e6e6e6" stroke-width="3" />
<line x1="1756.3284271247462" y1="1007.1715728752538" x2="1758.803300858899" y2="1004.6966991411009" stroke="#e6e6e6" stroke-width="3" />
<circle cx="1753.5" cy="1010" r="4.6" fill="none" stroke="#e6e6e6" stroke-width="3" />
<polygon points="1770.5,1008.0 1777.5,1008.0 1774,1012.0" fill="#d0d0d0" stroke="none" stroke-width="1" />
<path d="M1787 1010 H1803 M1795 1002 V1018" fill="none" stroke="#e6e6e6" stroke-width="1.5" />
<rect x="1814.5" y="1002.5" width="6" height="6" fill="none" stroke="#e6e6e6" stroke-width="1"/>
<circle cx="1826.5" cy="1008.4" r="3.1" fill="none" stroke="#e6e6e6" stroke-width="1" />
<polygon points="1820.5,1011.8 1824.1,1017.5 1816.9,1017.5" fill="none" stroke="#e6e6e6" stroke-width="1" />
<polygon points="1840,1002 1849.5,1002 1853,1005.5 1853,1014 1840,1014" fill="#2f68a8" stroke="none" stroke-width="1" />
<polygon points="1849.5,1002 1853,1005.5 1849.5,1005.5" fill="#8fb4dd" stroke="none" stroke-width="1" />
<rect x="1840" y="1011.1" width="6.6" height="4.9" fill="#f6b928" />
<path d="M1843.5 1002 V1011.2 M1840 1005.5 H1849" fill="none" stroke="#f4f4f4" stroke-width="1" />
<circle cx="1843.5" cy="1005.5" r="1.5" fill="#2f68a8" stroke="#f4f4f4" stroke-width="0.9" />
<path d="M1846.6 1014.2 L1849.6 1017.2 L1855.6 1011" fill="none" stroke="#3fb54a" stroke-width="2.1" />
<rect x="1866.5" y="1004.5" width="15" height="11" fill="none" stroke="#e6e6e6" stroke-width="1.2"/>
<path d="M1875.5 1009 L1879.5 1006 M1872.5 1011 L1868.5 1014" fill="none" stroke="#e6e6e6" stroke-width="1" />
<polygon points="1880,1005.5 1876.5,1006 1880,1009" fill="#e6e6e6" stroke="none" stroke-width="1" />
<polygon points="1868,1014.5 1871.5,1014 1868,1011" fill="#e6e6e6" stroke="none" stroke-width="1" />
<rect x="1890" y="1003" width="16" height="2" fill="#e6e6e6" />
<rect x="1890" y="1009" width="16" height="2" fill="#e6e6e6" />
<rect x="1890" y="1015" width="16" height="2" fill="#e6e6e6" />
<rect x="0" y="0" width="1916" height="1" fill="#0c9bd8" />
<rect x="0" y="0" width="1.1" height="1029" fill="#0c9fe3" />
<rect x="1915" y="0" width="1" height="1029" fill="#0c9bd8" />
<rect x="0" y="1028" width="1916" height="1" fill="#0c9bd8" />
</svg>
</body></html>
